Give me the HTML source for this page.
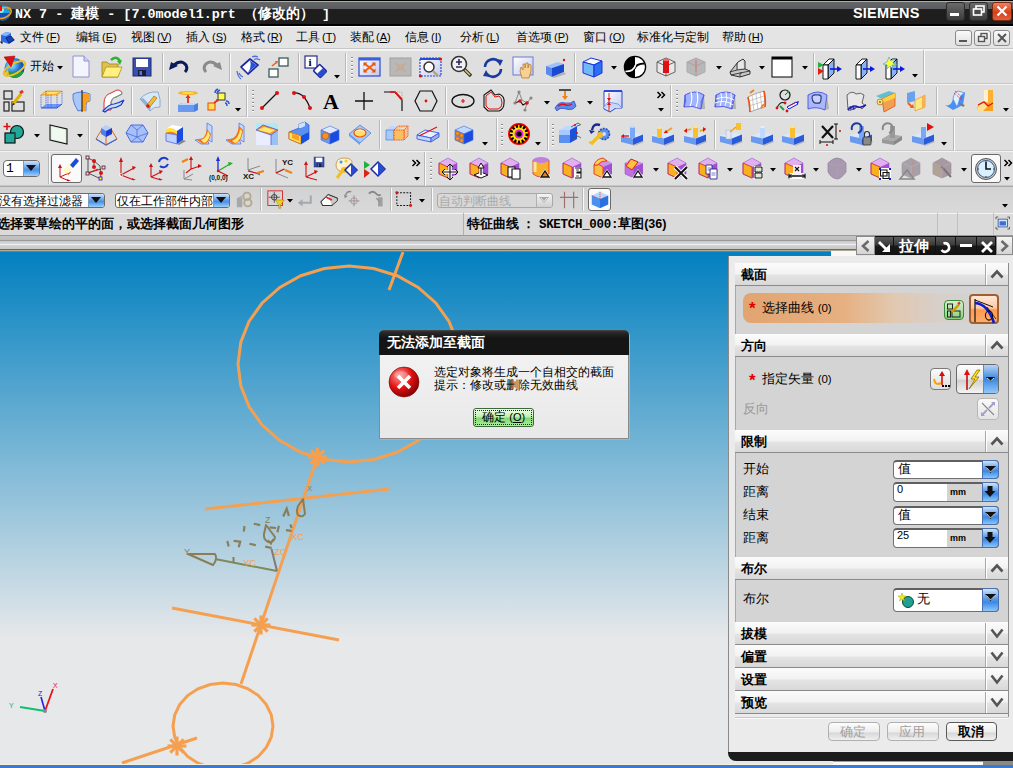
<!DOCTYPE html><html><head><meta charset="utf-8"><style>
*{margin:0;padding:0;box-sizing:border-box}
html,body{width:1013px;height:768px;overflow:hidden;background:#dadada;font-family:"Liberation Sans",sans-serif;}
.a{position:absolute}
.t{position:absolute;white-space:nowrap;line-height:1}
svg{position:absolute;overflow:visible}
</style></head><body><div class="a" style="left:0px;top:0px;width:1013px;height:26px;background:linear-gradient(#000 0px,#000 1px,#b8bcbc 1px,#a0a4a4 2px,#646868 2px,#5a5c60 8.5px,#1e1e1e 9.5px,#1e1e1e 24.5px,#000 24.5px)"></div>
<svg style="left:-6px;top:4px" width="18" height="18" viewBox="0 0 18 18"><circle cx="9" cy="9" r="7.5" fill="#20a0e0"/><circle cx="7" cy="6" r="3" fill="#80f0ff"/><path d="M9 16.5A7.5 7.5 0 0 1 1.5 9L16.5 9A7.5 7.5 0 0 1 9 16.5Z" fill="#1a50b0"/><ellipse cx="9" cy="9" rx="8.5" ry="5" fill="none" stroke="#f0a020" stroke-width="1.6" transform="rotate(-20 9 9)"/><rect x="2" y="1" width="6" height="6" fill="#e01020"/></svg>
<div class="t" style="left:15px;top:6px;color:#fff;font-family:Liberation Mono;font-size:13.4px;font-weight:bold">NX 7 - <span style="font-family:Liberation Sans;font-size:14px">建模</span> - [7.0model1.prt <span style="font-family:Liberation Sans;font-size:14px">（修改的）</span> ]</div>
<div class="t" style="left:853px;top:6px;color:#fff;font-size:14.5px;font-weight:bold;letter-spacing:0.2px">SIEMENS</div>
<div class="a" style="left:946px;top:2px;width:19px;height:19px;border-radius:3px;border:1px solid #2a2a2a;background:linear-gradient(#6a6a6a,#3c3c3c)"></div>
<div class="a" style="left:969px;top:2px;width:19px;height:19px;border-radius:3px;border:1px solid #2a2a2a;background:linear-gradient(#6a6a6a,#3c3c3c)"></div>
<div class="a" style="left:992px;top:2px;width:20px;height:19px;border-radius:3px;border:1px solid #7a2a10;background:linear-gradient(#f08060,#d84018 55%,#e06040)"></div>
<div class="a" style="left:950px;top:13px;width:9px;height:3px;background:#fff"></div>
<svg style="left:972px;top:4px" width="16" height="14" viewBox="0 0 16 14"><rect x="4" y="2" width="8" height="6" fill="none" stroke="#fff" stroke-width="1.6"/><rect x="1.5" y="5" width="8" height="6" fill="#4a4a4a" stroke="#fff" stroke-width="1.6"/></svg>
<svg style="left:994px;top:3px" width="16" height="16" viewBox="0 0 16 16"><path d="M3.5 3.5L12.5 12.5M12.5 3.5L3.5 12.5" stroke="#fff" stroke-width="2.2"/></svg>
<div class="a" style="left:0px;top:26px;width:1013px;height:24px;background:linear-gradient(#fafafa 0px,#fafafa 1px,#e4e4e4 1px,#e4e4e4 22px,#c8c8c8 22px,#c8c8c8 23px,#f4f4f4 23px)"></div>
<div class="t" style="left:20px;top:31px;color:#000;font-size:12px;">文件<span style="font-size:11px;margin-left:2px">(<u>F</u>)</span></div>
<div class="t" style="left:76px;top:31px;color:#000;font-size:12px;">编辑<span style="font-size:11px;margin-left:2px">(<u>E</u>)</span></div>
<div class="t" style="left:131px;top:31px;color:#000;font-size:12px;">视图<span style="font-size:11px;margin-left:2px">(<u>V</u>)</span></div>
<div class="t" style="left:186px;top:31px;color:#000;font-size:12px;">插入<span style="font-size:11px;margin-left:2px">(<u>S</u>)</span></div>
<div class="t" style="left:241px;top:31px;color:#000;font-size:12px;">格式<span style="font-size:11px;margin-left:2px">(<u>R</u>)</span></div>
<div class="t" style="left:296px;top:31px;color:#000;font-size:12px;">工具<span style="font-size:11px;margin-left:2px">(<u>T</u>)</span></div>
<div class="t" style="left:350px;top:31px;color:#000;font-size:12px;">装配<span style="font-size:11px;margin-left:2px">(<u>A</u>)</span></div>
<div class="t" style="left:405px;top:31px;color:#000;font-size:12px;">信息<span style="font-size:11px;margin-left:2px">(<u>I</u>)</span></div>
<div class="t" style="left:460px;top:31px;color:#000;font-size:12px;">分析<span style="font-size:11px;margin-left:2px">(<u>L</u>)</span></div>
<div class="t" style="left:516px;top:31px;color:#000;font-size:12px;">首选项<span style="font-size:11px;margin-left:2px">(<u>P</u>)</span></div>
<div class="t" style="left:583px;top:31px;color:#000;font-size:12px;">窗口<span style="font-size:11px;margin-left:2px">(<u>O</u>)</span></div>
<div class="t" style="left:637px;top:31px;color:#000;font-size:12px;">标准化与定制</div>
<div class="t" style="left:722px;top:31px;color:#000;font-size:12px;">帮助<span style="font-size:11px;margin-left:2px">(<u>H</u>)</span></div>
<svg style="left:0px;top:29px" width="16" height="17" viewBox="0 0 16 17"><path d="M1 6L6 3L11 4L11 8L15 11L9 15L3 13L1 12Z" fill="#2a6ae8"/><path d="M1 6L6 3L11 4L6 7Z" fill="#8ab8ff"/><path d="M6 9L11 7L14 11L9 14Z" fill="#1a40c0" stroke="#0a1a50" stroke-width="0.8"/><path d="M1 12L1 14L3 14" stroke="#333" stroke-width="1"/></svg>
<div class="a" style="left:955px;top:30px;width:17px;height:16px;border-radius:3px;border:1px solid #8a8a8a;background:linear-gradient(#fbfbfb,#dedede)"></div>
<div class="a" style="left:974px;top:30px;width:17px;height:16px;border-radius:3px;border:1px solid #8a8a8a;background:linear-gradient(#fbfbfb,#dedede)"></div>
<div class="a" style="left:993px;top:30px;width:17px;height:16px;border-radius:3px;border:1px solid #8a8a8a;background:linear-gradient(#fbfbfb,#dedede)"></div>
<div class="a" style="left:959px;top:40px;width:8px;height:2px;background:#555"></div>
<svg style="left:977px;top:32px" width="12" height="12" viewBox="0 0 12 12"><rect x="4" y="1.5" width="6" height="5" fill="none" stroke="#555" stroke-width="1.4"/><rect x="1.5" y="4.5" width="6" height="5" fill="#eee" stroke="#555" stroke-width="1.4"/></svg>
<svg style="left:996px;top:32px" width="12" height="12" viewBox="0 0 12 12"><path d="M2 2L10 10M10 2L2 10" stroke="#555" stroke-width="2"/></svg>
<div class="a" style="left:0px;top:50px;width:1013px;height:34px;background:#dfdfdf;border-top:1px solid #f4f4f4;border-bottom:1px solid #c8c8c8"></div>
<div class="a" style="left:0px;top:84px;width:1013px;height:33px;background:#dfdfdf;border-top:1px solid #f4f4f4;border-bottom:1px solid #c8c8c8"></div>
<div class="a" style="left:0px;top:117px;width:1013px;height:34px;background:#dfdfdf;border-top:1px solid #f4f4f4;border-bottom:1px solid #c8c8c8"></div>
<div class="a" style="left:0px;top:151px;width:1013px;height:35px;background:#dfdfdf;border-top:1px solid #f4f4f4;border-bottom:1px solid #c8c8c8"></div>
<div class="a" style="left:0px;top:186px;width:1013px;height:27px;background:linear-gradient(#d2d2d2,#d9d9d9);border-top:1px solid #a8a8a8"></div>
<div class="a" style="left:0px;top:213px;width:1013px;height:22px;background:#dadada;border-top:1px solid #f4f4f4"></div>
<div class="t" style="left:-3px;top:218px;color:#000;font-size:12.5px;font-weight:bold">选择要草绘的平的面，或选择截面几何图形</div>
<div class="a" style="left:463px;top:213px;width:1px;height:22px;background:#b0b0b0"></div>
<div class="a" style="left:937px;top:213px;width:1px;height:22px;background:#c0c0c0"></div>
<div class="a" style="left:957px;top:213px;width:1px;height:22px;background:#c0c0c0"></div>
<div class="a" style="left:993px;top:213px;width:1px;height:22px;background:#c0c0c0"></div>
<div class="t" style="left:467px;top:218px;color:#000;font-size:12.5px;font-weight:bold">特征曲线 ： <span style="font-family:Liberation Mono;letter-spacing:-0.3px">SKETCH_000:</span>草图(36)</div>
<svg width="0" height="0" style="position:absolute"><defs>
<linearGradient id="gb" x1="0" y1="0" x2="1" y2="1"><stop offset="0" stop-color="#e8f4ff"/><stop offset="1" stop-color="#2a6ae0"/></linearGradient>
<linearGradient id="go" x1="0" y1="0" x2="1" y2="1"><stop offset="0" stop-color="#fff0a0"/><stop offset="1" stop-color="#f07010"/></linearGradient>
<linearGradient id="gp" x1="0" y1="0" x2="1" y2="1"><stop offset="0" stop-color="#f0d0ff"/><stop offset="1" stop-color="#9040d0"/></linearGradient>
<linearGradient id="gw" x1="0" y1="0" x2="1" y2="1"><stop offset="0" stop-color="#ffffff"/><stop offset="1" stop-color="#c0c8f0"/></linearGradient>
<radialGradient id="gglobe" cx="0.35" cy="0.35" r="0.7"><stop offset="0" stop-color="#a0f0ff"/><stop offset="0.6" stop-color="#1a70d0"/><stop offset="1" stop-color="#0a3a90"/></radialGradient>
<radialGradient id="gred" cx="0.35" cy="0.3" r="0.75"><stop offset="0" stop-color="#ff9a9a"/><stop offset="0.55" stop-color="#e01010"/><stop offset="1" stop-color="#800000"/></radialGradient>
</defs></svg>
<svg style="left:2px;top:55px" width="24" height="24" viewBox="0 0 24 24"><circle cx="12.5" cy="13" r="10" fill="url(#gglobe)"/><path d="M3 16Q8 23 13 23Q19 23 22 16Q15 19 3 16Z" fill="#20a040"/><ellipse cx="12.5" cy="13.5" rx="12" ry="5" fill="none" stroke="#f0c020" stroke-width="2" transform="rotate(-30 12.5 13.5)"/><path d="M2 19L6 14L7 20Z" fill="#f0c020"/><path d="M2 2L13 1L9 12Z" fill="#e01010" stroke="#a00000" stroke-width="0.5"/></svg>
<div class="t" style="left:30px;top:60px;color:#000;font-size:12px">开始</div>
<svg style="left:57px;top:65.5px" width="6" height="4" viewBox="0 0 6 4"><path d="M0 0L6 0L3 3.5Z" fill="#000"/></svg>
<svg style="left:70px;top:55px" width="24" height="24" viewBox="0 0 24 24"><path d="M3 1L14 1L19 6L19 22L3 22Z" fill="#f4f4ff" stroke="#9090d0" stroke-width="1"/><path d="M14 1L14 6L19 6" fill="#d0d0f0" stroke="#9090d0" stroke-width="1"/></svg>
<svg style="left:100px;top:55px" width="24" height="24" viewBox="0 0 24 24"><path d="M2 8L2 22L18 22L18 9L9 9L7 7L2 7Z" fill="#e0c050" stroke="#a08010" stroke-width="0.8"/><path d="M2 22L6 12L22 12L18 22Z" fill="#fff080" stroke="#b09020" stroke-width="0.8"/><path d="M11 5Q16 0 20 6" fill="none" stroke="#30b030" stroke-width="2.6"/><path d="M17 6L22 5L20 10Z" fill="#30b030"/></svg>
<svg style="left:131px;top:56px" width="24" height="24" viewBox="0 0 24 24"><rect x="2" y="2" width="18" height="18" fill="#3a50b0" stroke="#1a2a70" stroke-width="1"/><rect x="5" y="3" width="12" height="8" fill="#fff"/><rect x="7" y="14" width="8" height="6" fill="#1a1a3a"/><rect x="8.5" y="15" width="2.5" height="4" fill="#5a7ad0"/></svg>
<div class="a" style="left:162px;top:53px;width:1px;height:29px;background:#b8b8b8"></div>
<div class="a" style="left:163px;top:53px;width:1px;height:29px;background:#fafafa"></div>
<svg style="left:168px;top:56px" width="24" height="24" viewBox="0 0 24 24"><path d="M6 9Q13 3 18 9Q20 13 17 16" fill="none" stroke="#0a1a5a" stroke-width="3"/><path d="M1 14L3 6L10 10Z" fill="#0a1a5a"/></svg>
<svg style="left:199px;top:56px" width="24" height="24" viewBox="0 0 24 24"><path d="M18 9Q11 3 6 9Q4 13 7 16" fill="none" stroke="#8a8a8a" stroke-width="3"/><path d="M23 14L21 6L14 10Z" fill="#8a8a8a"/></svg>
<div class="a" style="left:229px;top:53px;width:1px;height:29px;background:#b8b8b8"></div>
<div class="a" style="left:230px;top:53px;width:1px;height:29px;background:#fafafa"></div>
<svg style="left:237px;top:55px" width="24" height="24" viewBox="0 0 24 24"><path d="M4 12L13 4L21 10L11 19Z" fill="#fff" stroke="#1a2aa0" stroke-width="1.7" stroke-linejoin="round"/><path d="M13 5.5L19.5 10L11 17.5Q15 12 13 5.5Z" fill="#2a50d8"/><path d="M15 2Q18 0.5 21 2M17 4.5Q20 3 23 5" fill="none" stroke="#4a70e0" stroke-width="1.3"/><path d="M2 18Q3 21 6 22M0 16Q1 22 4 24" fill="none" stroke="#4a70e0" stroke-width="1.3"/></svg>
<svg style="left:267px;top:56px" width="24" height="24" viewBox="0 0 24 24"><rect x="12" y="2" width="9" height="8" fill="#fff" stroke="#3a5a5a" stroke-width="1.3"/><rect x="2" y="13" width="9" height="8" fill="#fff" stroke="#3a5a5a" stroke-width="1.3"/><path d="M5 10L10 6" stroke="#f06010" stroke-width="1.6"/><path d="M8 5L11 5L10 8Z" fill="#f06010"/></svg>
<div class="a" style="left:298px;top:53px;width:1px;height:29px;background:#b8b8b8"></div>
<div class="a" style="left:299px;top:53px;width:1px;height:29px;background:#fafafa"></div>
<svg style="left:304px;top:55px" width="24" height="24" viewBox="0 0 24 24"><rect x="1" y="1" width="12" height="12" fill="#fff" stroke="#2a2a8a" stroke-width="1.2"/><text x="4.5" y="11" font-family="Liberation Serif" font-weight="bold" font-size="11" fill="#000">i</text><g transform="rotate(45 16 16)"><rect x="11" y="11.5" width="10" height="9" rx="1" fill="#fff" stroke="#1a2aa0" stroke-width="1.5"/><path d="M16 12L21 12L21 20L16 20Z" fill="#2a4ad0"/></g></svg>
<svg style="left:334px;top:74.5px" width="6" height="4" viewBox="0 0 6 4"><path d="M0 0L6 0L3 3.5Z" fill="#000"/></svg>
<div class="a" style="left:345px;top:53px;width:1px;height:29px;background:#b8b8b8"></div>
<div class="a" style="left:346px;top:53px;width:1px;height:29px;background:#fafafa"></div>
<div class="a" style="left:351px;top:57px;width:2px;height:22px;background:repeating-linear-gradient(#8a8a8a 0px,#8a8a8a 1px,#fff 1px,#fff 2px,transparent 2px,transparent 4px)"></div>
<svg style="left:358px;top:56px" width="24" height="24" viewBox="0 0 24 24"><rect x="1" y="2" width="21" height="18" fill="url(#gw)" stroke="#2a4ad0" stroke-width="1.2"/><rect x="1" y="2" width="21" height="2.5" fill="#3a60e0"/><path d="M7 8L16 15M16 8L7 15" stroke="#f06010" stroke-width="2"/><path d="M5.5 6.5L9.5 6.5L5.5 10.5Z M17.5 6.5L13.5 6.5L17.5 10.5Z M5.5 16.5L9.5 16.5L5.5 12.5Z M17.5 16.5L13.5 16.5L17.5 12.5Z" fill="#e05010"/></svg>
<svg style="left:389px;top:56px" width="24" height="24" viewBox="0 0 24 24"><rect x="1" y="2" width="21" height="18" fill="#b8b8b8" stroke="#a0a0a0" stroke-width="1"/><path d="M6 7L17 16M17 7L6 16" stroke="#c8a890" stroke-width="1.6"/><circle cx="11.5" cy="11.5" r="3" fill="none" stroke="#c8a890"/></svg>
<svg style="left:419px;top:56px" width="24" height="24" viewBox="0 0 24 24"><rect x="1" y="2" width="21" height="18" fill="url(#gw)" stroke="#2a4ad0" stroke-width="1.2" stroke-dasharray="2 1"/><path d="M1 3L22 3" stroke="#2a4ad0" stroke-width="2"/><circle cx="10" cy="11" r="5" fill="#fff" stroke="#333" stroke-width="1.5"/><path d="M14 15L19 20" stroke="#c0a060" stroke-width="2.4"/><circle cx="21.5" cy="3" r="1.6" fill="#e01010"/><circle cx="1.5" cy="20" r="1.6" fill="#e01010"/></svg>
<svg style="left:450px;top:55px" width="24" height="24" viewBox="0 0 24 24"><circle cx="9" cy="9" r="7.5" fill="#f0f0f0" stroke="#333" stroke-width="1.6"/><path d="M9 4L9 10M6 7L12 7M6 12L12 12" stroke="#2a2a5a" stroke-width="1.6"/><path d="M14 14L21 21" stroke="#333" stroke-width="3.5"/><path d="M15 15L20 20" stroke="#e0c060" stroke-width="1.6"/></svg>
<svg style="left:481px;top:56px" width="24" height="24" viewBox="0 0 24 24"><path d="M4 11A8 8 0 0 1 18 6" fill="none" stroke="#1a3aa0" stroke-width="2.6"/><path d="M20 13A8 8 0 0 1 6 18" fill="none" stroke="#1a3aa0" stroke-width="2.6"/><path d="M15 3L22 4L19 10Z M9 21L2 20L5 14Z" fill="#1a3aa0"/></svg>
<svg style="left:512px;top:56px" width="24" height="24" viewBox="0 0 24 24"><rect x="1" y="1" width="20" height="18" fill="url(#gw)" stroke="#6a7ad0" stroke-width="1"/><path d="M10 22L8 15L9 11L11 14L11 8L13 8L13 12L14 7L16 7L16 12L17 8L19 9L19 15L17 22Z" fill="#f8d090" stroke="#b07020" stroke-width="0.7"/></svg>
<svg style="left:543px;top:56px" width="24" height="24" viewBox="0 0 24 24"><path d="M3 10L15 6L21 8L9 12Z" fill="#a0c0ff"/><path d="M3 10L9 12L9 21L3 18Z" fill="#5a8af0"/><path d="M9 12L21 8L21 16L9 21Z" fill="#1a4ad0"/><path d="M9 21L21 16L23 18L11 22Z" fill="#b0b0b0"/><circle cx="21" cy="4" r="1.2" fill="#e01010"/></svg>
<div class="a" style="left:574px;top:53px;width:1px;height:29px;background:#b8b8b8"></div>
<div class="a" style="left:575px;top:53px;width:1px;height:29px;background:#fafafa"></div>
<svg style="left:580px;top:55px" width="24" height="24" viewBox="0 0 24 24"><path d="M3 7L11 3L22 6L14 10Z" fill="#f4faff" stroke="#1a30e0" stroke-width="1"/><path d="M3 7L14 10L14 22L3 18Z" fill="#70b8f8" stroke="#1a30e0" stroke-width="1"/><path d="M14 10L22 6L22 18L14 22Z" fill="#2a70f0" stroke="#1a30e0" stroke-width="1"/></svg>
<svg style="left:611px;top:65.5px" width="6" height="4" viewBox="0 0 6 4"><path d="M0 0L6 0L3 3.5Z" fill="#000"/></svg>
<svg style="left:622px;top:55px" width="24" height="24" viewBox="0 0 24 24"><circle cx="13" cy="12" r="10.6" fill="#fff" stroke="#000" stroke-width="1.3"/><path d="M13 1.4A10.6 10.6 0 0 0 13 22.6Z" fill="#000"/><path d="M12.5 14Q14 8.5 22.5 8.5" fill="none" stroke="#000" stroke-width="1.8"/><path d="M13.5 10Q12 16.5 3.5 16.5" fill="none" stroke="#fff" stroke-width="1.6"/></svg>
<svg style="left:654px;top:55px" width="24" height="24" viewBox="0 0 24 24"><path d="M3 7L12 3L21 7L21 17L12 21L3 17Z" fill="#e8e8e8" stroke="#555" stroke-width="0.9"/><path d="M3 7L12 11L21 7M12 11L12 21" fill="none" stroke="#555" stroke-width="0.9"/><rect x="9" y="5" width="6" height="13" fill="#e01010"/><ellipse cx="12" cy="5" rx="3" ry="1.3" fill="#ff6060"/></svg>
<svg style="left:684px;top:55px" width="24" height="24" viewBox="0 0 24 24"><path d="M3 7L12 3L21 7L21 17L12 21L3 17Z" fill="#b8b8b8" stroke="#a8a8a8" stroke-width="0.9"/><path d="M3 7L12 11L21 7M12 11L12 21" fill="none" stroke="#a0a0a0" stroke-width="0.9"/><rect x="11" y="5" width="2" height="12" fill="#c89090"/></svg>
<svg style="left:716px;top:65.5px" width="6" height="4" viewBox="0 0 6 4"><path d="M0 0L6 0L3 3.5Z" fill="#000"/></svg>
<svg style="left:728px;top:55px" width="24" height="24" viewBox="0 0 24 24"><path d="M2 17L10 7L15 4L17 6L17 14L22 16L22 19L12 22L3 20Z" fill="#c8c8c8" stroke="#333" stroke-width="1"/><path d="M2 17L9 15L9 8M9 15L17 14M3 20L12 18L22 16M12 18L12 22" fill="none" stroke="#333" stroke-width="0.9"/><path d="M10 8L15 5L16 13L10 14Z" fill="#e8e8e8"/><circle cx="13" cy="18" r="0.8" fill="#333"/></svg>
<svg style="left:759px;top:65.5px" width="6" height="4" viewBox="0 0 6 4"><path d="M0 0L6 0L3 3.5Z" fill="#000"/></svg>
<svg style="left:770px;top:55px" width="24" height="24" viewBox="0 0 24 24"><rect x="2" y="2" width="20" height="20" fill="#fff" stroke="#000" stroke-width="1"/><rect x="2" y="2" width="20" height="2.5" fill="#000"/></svg>
<svg style="left:802px;top:65.5px" width="6" height="4" viewBox="0 0 6 4"><path d="M0 0L6 0L3 3.5Z" fill="#000"/></svg>
<div class="a" style="left:813px;top:53px;width:1px;height:29px;background:#b8b8b8"></div>
<div class="a" style="left:814px;top:53px;width:1px;height:29px;background:#fafafa"></div>
<svg style="left:818px;top:56px" width="24" height="24" viewBox="0 0 24 24"><path d="M5 9L11 3L16 3L10 9Z" fill="#fff" stroke="#000" stroke-width="0.9"/><path d="M10 9L16 3L16 17L10 23Z" fill="#8ab0f8" stroke="#000" stroke-width="0.9"/><path d="M5 9L10 9L10 23L5 23Z" fill="#fff" stroke="#000" stroke-width="0.9"/><path d="M12 13L21 13" stroke="#0a1ae0" stroke-width="1.6"/><path d="M19 10L24 13L19 16Z" fill="#0a1ae0"/><path d="M0 6L6 9L0 12Z" fill="#20b040"/><path d="M0 12L6 15L0 19Z" fill="#e02010"/></svg>
<svg style="left:851px;top:56px" width="24" height="24" viewBox="0 0 24 24"><path d="M5 9L11 3L16 3L10 9Z" fill="#fff" stroke="#000" stroke-width="0.9"/><path d="M10 9L16 3L16 17L10 23Z" fill="#8ab0f8" stroke="#000" stroke-width="0.9"/><path d="M5 9L10 9L10 23L5 23Z" fill="#fff" stroke="#000" stroke-width="0.9"/><path d="M12 13L21 13" stroke="#0a1ae0" stroke-width="1.6"/><path d="M19 10L24 13L19 16Z" fill="#0a1ae0"/></svg>
<svg style="left:881px;top:56px" width="24" height="24" viewBox="0 0 24 24"><path d="M5 9L11 3L16 3L10 9Z" fill="#fff" stroke="#000" stroke-width="0.9"/><path d="M10 9L16 3L16 17L10 23Z" fill="#8ab0f8" stroke="#000" stroke-width="0.9"/><path d="M5 9L10 9L10 23L5 23Z" fill="#fff" stroke="#000" stroke-width="0.9"/><path d="M12 13L21 13" stroke="#0a1ae0" stroke-width="1.6"/><path d="M19 10L24 13L19 16Z" fill="#0a1ae0"/><path d="M8 1L10 5L14 3L12 7L16 9L11 9L12 13L9 10L6 13L6 9L2 8L6 6Z" fill="#ffff30" stroke="#30a0e0" stroke-width="0.6"/></svg>
<svg style="left:912px;top:73.5px" width="6" height="4" viewBox="0 0 6 4"><path d="M0 0L6 0L3 3.5Z" fill="#000"/></svg>
<div class="a" style="left:923px;top:50px;width:1px;height:34px;background:#b8b8b8"></div>
<div class="a" style="left:924px;top:50px;width:1px;height:34px;background:#fafafa"></div>
<svg style="left:2px;top:89px" width="24" height="24" viewBox="0 0 24 24"><rect x="2" y="2" width="8" height="8" fill="none" stroke="#222" stroke-width="1.2"/><rect x="2" y="13" width="5" height="9" fill="none" stroke="#222" stroke-width="1.2"/><rect x="10" y="13" width="12" height="9" fill="none" stroke="#222" stroke-width="1.2"/><path d="M11 15L19 5" stroke="#e0b000" stroke-width="3"/><path d="M18 4L21 2" stroke="#e03030" stroke-width="3"/><path d="M10 17L11 14L13 15Z" fill="#222"/></svg>
<div class="a" style="left:33px;top:87px;width:1px;height:28px;background:#b8b8b8"></div>
<div class="a" style="left:34px;top:87px;width:1px;height:28px;background:#fafafa"></div>
<svg style="left:39px;top:89px" width="24" height="24" viewBox="0 0 24 24"><path d="M2 6L7 2L23 2L18 6Z" fill="#f8b830" stroke="#e09020" stroke-width="0.6"/><path d="M4 5L8 3L20 3L16 5Z" fill="#ffe070"/><path d="M2 19L7 15L23 15L18 19Z" fill="#6a9af8"/><path d="M2 6L2 19M18 6L18 19M23 2L23 15M7 2L7 15M9 6L9 19M12 6L12 19" fill="none" stroke="#4a60e0" stroke-width="0.8" stroke-dasharray="1.2 0.6"/><path d="M2 19L18 19L23 15" fill="none" stroke="#3a50d0" stroke-width="1"/></svg>
<svg style="left:70px;top:89px" width="24" height="24" viewBox="0 0 24 24"><path d="M3 5Q11 1 20 5L20 12Q16 12 16 16L16 22Q12 20 8 22Q4 16 3 10Z" fill="#a8c8f8" stroke="#3a6ae0" stroke-width="0.8"/><path d="M12 4L20 5L20 12Q16 12 16 16L16 22L12 22Z" fill="#f8a020"/><path d="M12 1L12 23" stroke="#000" stroke-width="0.9"/></svg>
<svg style="left:101px;top:89px" width="24" height="24" viewBox="0 0 24 24"><path d="M3 14Q3 6 10 4L16 1Q21 1 21 5L15 8Q10 9 10 15L10 21L3 21Z" fill="#fff" stroke="#e03030" stroke-width="1"/><path d="M10 15Q10 9 15 8L21 5" fill="none" stroke="#20c0a0" stroke-width="0.9"/><path d="M2 22Q8 15 13 15Q18 14 23 11L20 16Q15 19 11 19Q7 20 4 23Z" fill="#c8e0f8" stroke="#1a3ad0" stroke-width="1.2"/></svg>
<div class="a" style="left:131px;top:87px;width:1px;height:28px;background:#b8b8b8"></div>
<div class="a" style="left:132px;top:87px;width:1px;height:28px;background:#fafafa"></div>
<svg style="left:138px;top:89px" width="24" height="24" viewBox="0 0 24 24"><path d="M2 10Q9 2 20 3Q23 10 22 18Q16 17 12 22Q7 15 2 10Z" fill="#d8e8f8" stroke="#7a9ac0" stroke-width="0.8"/><path d="M2 10Q7 15 12 22L13 17Q9 13 5 9Z" fill="#90b0d8"/><path d="M8 17L16 7L19 9L11 19Z" fill="#f0c030" stroke="#906010" stroke-width="0.6"/><circle cx="10" cy="17" r="1.7" fill="#e01010"/></svg>
<div class="a" style="left:168px;top:87px;width:1px;height:28px;background:#b8b8b8"></div>
<div class="a" style="left:169px;top:87px;width:1px;height:28px;background:#fafafa"></div>
<svg style="left:176px;top:89px" width="24" height="24" viewBox="0 0 24 24"><ellipse cx="12" cy="4" rx="10" ry="2" fill="#f8b030"/><ellipse cx="12" cy="4" rx="6" ry="1" fill="#ffe040"/><path d="M12 15L12 8" stroke="#e03010" stroke-width="1.8"/><path d="M9.5 9L12 5.5L14.5 9Z" fill="#e03010"/><path d="M2 16L6 14L22 14L22 21L18 23L2 23Z" fill="#4a80e0"/><path d="M2 16L6 14L22 14L18 16Z" fill="#c0d8ff"/><path d="M2 16L18 16L18 23L2 23Z" fill="#6a9af0"/></svg>
<svg style="left:206px;top:89px" width="24" height="24" viewBox="0 0 24 24"><rect x="12" y="4" width="7" height="7" fill="#ffff50" stroke="#333" stroke-width="1"/><rect x="2" y="14" width="7" height="7" fill="#ffe050" stroke="#f05010" stroke-width="1.1"/><path d="M8 14L12 11" stroke="#e03010" stroke-width="1.6"/><path d="M10 10L13 10L12 13Z" fill="#e03010"/><path d="M9 4Q9 1 12 0M11 5Q11 2 14 1M20 12Q23 12 23 15M19 14Q21 14 21 17" fill="none" stroke="#2a50e0" stroke-width="1.4"/></svg>
<svg style="left:235px;top:107.5px" width="6" height="4" viewBox="0 0 6 4"><path d="M0 0L6 0L3 3.5Z" fill="#000"/></svg>
<div class="a" style="left:246px;top:85px;width:1px;height:32px;background:#b8b8b8"></div>
<div class="a" style="left:247px;top:85px;width:1px;height:32px;background:#fafafa"></div>
<div class="a" style="left:252px;top:90px;width:2px;height:23px;background:repeating-linear-gradient(#8a8a8a 0px,#8a8a8a 1px,#fff 1px,#fff 2px,transparent 2px,transparent 4px)"></div>
<svg style="left:259px;top:89px" width="24" height="24" viewBox="0 0 24 24"><path d="M3 19L18 4" stroke="#111" stroke-width="1.3"/><circle cx="3" cy="19" r="2" fill="#e01010"/><circle cx="18" cy="4" r="2" fill="#e01010"/></svg>
<svg style="left:291px;top:89px" width="24" height="24" viewBox="0 0 24 24"><path d="M3 4Q13 3 19 19" fill="none" stroke="#111" stroke-width="1.3"/><circle cx="3" cy="4" r="2" fill="#e01010"/><circle cx="13" cy="8" r="2" fill="#e01010"/><circle cx="19" cy="19" r="2" fill="#e01010"/></svg>
<svg style="left:322px;top:89px" width="24" height="24" viewBox="0 0 24 24"><text x="1" y="20" font-family="Liberation Serif" font-weight="bold" font-size="22" fill="#000">A</text></svg>
<svg style="left:352px;top:89px" width="24" height="24" viewBox="0 0 24 24"><path d="M12 3L12 21M3 12L21 12" stroke="#111" stroke-width="1.3"/></svg>
<svg style="left:383px;top:89px" width="24" height="24" viewBox="0 0 24 24"><path d="M1 3L12 3L19 11L19 22" fill="none" stroke="#111" stroke-width="1.2"/><path d="M12 3L19 11" stroke="#e01010" stroke-width="1.5"/><path d="M7 3L12 3L19 10" stroke="#e01010" stroke-width="1.5" fill="none"/><path d="M12 3L19 3L19 11" fill="none" stroke="#888" stroke-width="0.6" stroke-dasharray="1 1"/></svg>
<svg style="left:414px;top:89px" width="24" height="24" viewBox="0 0 24 24"><path d="M6 2L18 2L23 12L18 22L6 22L1 12Z" fill="none" stroke="#111" stroke-width="1.2"/><circle cx="12" cy="12" r="1.4" fill="#e01010"/></svg>
<div class="a" style="left:445px;top:87px;width:1px;height:28px;background:#b8b8b8"></div>
<div class="a" style="left:446px;top:87px;width:1px;height:28px;background:#fafafa"></div>
<svg style="left:451px;top:89px" width="24" height="24" viewBox="0 0 24 24"><ellipse cx="12" cy="12" rx="11" ry="6.5" fill="none" stroke="#111" stroke-width="1.3"/><path d="M12 10L12 14M10 12L14 12" stroke="#e01010" stroke-width="1.2"/></svg>
<svg style="left:482px;top:89px" width="24" height="24" viewBox="0 0 24 24"><path d="M2 12L2 6L9 1L13 6L17 5Q23 7 22 14Q22 20 17 22L6 22L2 18Z" fill="none" stroke="#111" stroke-width="1.1"/><path d="M4 12L4 7L9 3L13 8L17 7Q20 9 20 14Q20 19 16 20L7 20L4 17Z" fill="none" stroke="#e01010" stroke-width="1"/></svg>
<svg style="left:513px;top:89px" width="24" height="24" viewBox="0 0 24 24"><path d="M2 14L7 12L10 16L15 13" fill="none" stroke="#111" stroke-width="1.2"/><path d="M2 14L6 3L9 11L14 14L12 21M14 14L18 9" fill="none" stroke="#888" stroke-width="1"/><circle cx="6" cy="3" r="1.6" fill="#888"/><circle cx="2" cy="14" r="1.6" fill="#888"/><circle cx="12" cy="21" r="1.6" fill="#888"/><circle cx="18" cy="9" r="1.6" fill="#888"/><circle cx="7" cy="12" r="1.8" fill="#e01010"/><circle cx="14" cy="14" r="1.8" fill="#e01010"/></svg>
<svg style="left:544px;top:100.5px" width="6" height="4" viewBox="0 0 6 4"><path d="M0 0L6 0L3 3.5Z" fill="#000"/></svg>
<svg style="left:554px;top:89px" width="24" height="24" viewBox="0 0 24 24"><path d="M5 1L17 1" stroke="#111" stroke-width="1.4"/><path d="M11 2L11 8" stroke="#f08010" stroke-width="1.8"/><path d="M8 7L11 11L14 7Z" fill="#f08010"/><path d="M1 19Q5 12 11 14Q17 15 20 12L22 17Q19 22 12 20Q6 18 3 22Z" fill="#5a8af0" stroke="#2a4ad0" stroke-width="0.8"/><path d="M4 17Q8 14 12 16Q15 17 18 15" fill="none" stroke="#e01010" stroke-width="1.4"/></svg>
<svg style="left:587px;top:100.5px" width="6" height="4" viewBox="0 0 6 4"><path d="M0 0L6 0L3 3.5Z" fill="#000"/></svg>
<svg style="left:600px;top:89px" width="24" height="24" viewBox="0 0 24 24"><path d="M4 2L22 2L22 19L16 19L10 23L4 20Z" fill="url(#gw)" stroke="#2a4ad0" stroke-width="1"/><path d="M4 2L22 2" stroke="#2a4ad0" stroke-width="2"/><path d="M3 19L8 13L18 15L22 19" fill="#c8d8f8" stroke="#6a8ae0" stroke-width="0.8"/><path d="M9 4L9 22" stroke="#e01010" stroke-width="0.9"/><path d="M7 9L9 12L11 9Z M7 16L9 13L11 16Z" fill="#e01010"/></svg>
<svg style="left:657px;top:91px" width="9" height="8" viewBox="0 0 9 8"><path d="M0.5 1L3.5 4L0.5 7M4.5 1L7.5 4L4.5 7" fill="none" stroke="#000" stroke-width="1.5"/></svg>
<svg style="left:658px;top:107.5px" width="6" height="4" viewBox="0 0 6 4"><path d="M0 0L6 0L3 3.5Z" fill="#000"/></svg>
<div class="a" style="left:670px;top:85px;width:1px;height:32px;background:#b8b8b8"></div>
<div class="a" style="left:671px;top:85px;width:1px;height:32px;background:#fafafa"></div>
<div class="a" style="left:676px;top:90px;width:2px;height:23px;background:repeating-linear-gradient(#8a8a8a 0px,#8a8a8a 1px,#fff 1px,#fff 2px,transparent 2px,transparent 4px)"></div>
<svg style="left:682px;top:89px" width="24" height="24" viewBox="0 0 24 24"><path d="M3 6Q13 0 22 6L19 20Q11 16 2 18Z" fill="#a0b4ff" stroke="#4a50e0" stroke-width="0.9"/><path d="M3 6Q5 12 2 18M22 6Q18 12 19 20" fill="none" stroke="#4a50e0" stroke-width="0.8"/><path d="M19 20L23 20L22 6" fill="#888" opacity="0.5"/><path d="M9 3Q11 11 8 17M15 3Q17 11 14 18" fill="none" stroke="#fff" stroke-width="1.2"/></svg>
<svg style="left:713px;top:89px" width="24" height="24" viewBox="0 0 24 24"><path d="M3 6Q13 0 22 6L19 20Q11 16 2 18Z" fill="#a0b4ff" stroke="#4a50e0" stroke-width="0.9"/><path d="M3 6Q5 12 2 18M22 6Q18 12 19 20" fill="none" stroke="#4a50e0" stroke-width="0.8"/><path d="M19 20L23 20L22 6" fill="#888" opacity="0.5"/><path d="M8 4Q10 11 7 17M13 3Q15 11 12 17M18 4Q19 11 17 18M3 10Q12 6 21 11M2 14Q12 10 20 16" fill="none" stroke="#fff" stroke-width="1"/></svg>
<svg style="left:744px;top:89px" width="24" height="24" viewBox="0 0 24 24"><path d="M4 8Q12 4 20 2L21 18Q13 20 6 23Z" fill="#fff" stroke="#888" stroke-width="0.7"/><path d="M8 6L10 22M12 5L14 21M16 3L18 20M5 12L20 7M5 17L21 12" fill="none" stroke="#aaa" stroke-width="0.6"/><path d="M4 8Q6 15 6 23M20 2Q22 10 21 18" fill="none" stroke="#f05010" stroke-width="1.6"/><path d="M6 4L10 1M17 19L20 15" stroke="#f08020" stroke-width="2"/></svg>
<svg style="left:775px;top:89px" width="24" height="24" viewBox="0 0 24 24"><circle cx="10" cy="6" r="5" fill="none" stroke="#111" stroke-width="1.2"/><path d="M10 6L13 3" stroke="#e01010" stroke-width="1"/><circle cx="13" cy="3" r="1.2" fill="#20a040"/><path d="M2 19Q5 12 10 14" fill="none" stroke="#111" stroke-width="1.1"/><circle cx="2" cy="19" r="1.4" fill="#e01010"/><circle cx="10" cy="14" r="1.4" fill="#e01010"/><circle cx="12" cy="22" r="1.4" fill="#e01010"/><path d="M5 17L9 21" stroke="#20a040" stroke-width="2"/><path d="M12 18L21 13L23 15L14 20Z" fill="#f0f0ff" stroke="#1a1ad0" stroke-width="1"/><path d="M14 17L20 14" stroke="#e01010" stroke-width="0.8"/><path d="M21 13L24 12L23 15Z" fill="#1a1ad0"/></svg>
<svg style="left:805px;top:89px" width="24" height="24" viewBox="0 0 24 24"><path d="M3 6Q13 0 22 6L20 21Q11 17 3 20Z" fill="#a8b8ff" stroke="#4a50e0" stroke-width="0.9"/><path d="M7 9Q7 5 12 6Q17 5 16 10Q16 15 12 14Q8 15 7 9Z" fill="#c8d0ff" stroke="#2a3a6a" stroke-width="1.2"/><path d="M20 21L24 20L22 6" fill="#888" opacity="0.5"/></svg>
<div class="a" style="left:837px;top:87px;width:1px;height:28px;background:#b8b8b8"></div>
<div class="a" style="left:838px;top:87px;width:1px;height:28px;background:#fafafa"></div>
<svg style="left:844px;top:89px" width="24" height="24" viewBox="0 0 24 24"><path d="M3 6Q8 1 12 5Q17 3 20 6L18 14Q21 17 22 16L18 20Q14 16 10 20Q6 22 4 21Z" fill="#e8e8e8" stroke="#555" stroke-width="0.9"/><path d="M4 21Q9 15 14 18Q17 19 22 16" fill="none" stroke="#1a1ab0" stroke-width="1.5"/><path d="M6 17L7 21M9 17L10 21M4 19L12 19" stroke="#1a1ab0" stroke-width="0.9"/></svg>
<svg style="left:874px;top:89px" width="24" height="24" viewBox="0 0 24 24"><path d="M2 7L15 2L21 4L8 10Z" fill="#60c0d0"/><path d="M8 10L21 4L21 17L10 23Z" fill="#f0a050" stroke="#e05020" stroke-width="0.8"/><path d="M8 10L21 4L21 9L8 14Z" fill="#ffd040"/><circle cx="6" cy="13" r="3" fill="#ffe080" stroke="#a08020" stroke-width="0.8"/><circle cx="6" cy="13" r="1" fill="#a06010"/></svg>
<svg style="left:904px;top:89px" width="24" height="24" viewBox="0 0 24 24"><path d="M3 4L11 2L11 12L3 14Z" fill="#6aa0f0"/><path d="M11 11Q16 9 21 6L21 18Q16 20 11 22Z" fill="#ffe880" stroke="#e0a040" stroke-width="0.8"/><path d="M21 6L21 18L18 20L18 8Z" fill="#f8b050"/><path d="M4 14L8 18" stroke="#f06010" stroke-width="2"/><path d="M6 19L10 19L9 15Z" fill="#f06010"/></svg>
<div class="a" style="left:936px;top:87px;width:1px;height:28px;background:#b8b8b8"></div>
<div class="a" style="left:937px;top:87px;width:1px;height:28px;background:#fafafa"></div>
<svg style="left:943px;top:89px" width="24" height="24" viewBox="0 0 24 24"><path d="M2 16Q8 18 10 10Q11 3 15 2L22 4L20 16L10 21Z" fill="#4a90f0"/><path d="M10 10Q11 3 15 2L22 4Q17 5 16 12L14 18Z" fill="#e0f0ff" stroke="#4a7ae0" stroke-width="0.6"/><path d="M11 4L19 11M12 2L20 9" stroke="#e01010" stroke-width="0.9" stroke-dasharray="1 1"/><path d="M16 14L22 16L20 18Z" fill="#777"/></svg>
<svg style="left:973px;top:89px" width="24" height="24" viewBox="0 0 24 24"><path d="M11 1L20 1L20 22L11 22Z" fill="#ffb030"/><path d="M11 1L15 1L15 14L11 14Z" fill="#fff0d0"/><path d="M4 22Q4 14 11 12L20 16L20 22Z" fill="#f8a020"/><path d="M4 22Q5 15 11 13L15 17L10 22Z" fill="#ffe090"/><path d="M5 16L11 13L15 17L20 14" fill="none" stroke="#e01010" stroke-width="1.3"/></svg>
<svg style="left:1003px;top:107.5px" width="6" height="4" viewBox="0 0 6 4"><path d="M0 0L6 0L3 3.5Z" fill="#000"/></svg>
<svg style="left:2px;top:122px" width="24" height="24" viewBox="0 0 24 24"><circle cx="15" cy="10" r="6.5" fill="#20a898" stroke="#111" stroke-width="1.2"/><rect x="3" y="11" width="10" height="10" fill="#20a898" stroke="#111" stroke-width="1.2"/><path d="M13 11L13 16" stroke="#555" stroke-width="0.8"/><path d="M5 1L5 8M1.5 4.5L8.5 4.5" stroke="#e01010" stroke-width="1.6"/></svg>
<svg style="left:34px;top:133.5px" width="6" height="4" viewBox="0 0 6 4"><path d="M0 0L6 0L3 3.5Z" fill="#000"/></svg>
<svg style="left:47px;top:122px" width="24" height="24" viewBox="0 0 24 24"><path d="M3 3L20 7L20 22L3 18Z" fill="#e0f0e0" stroke="#111" stroke-width="1.1"/><path d="M5 5L18 8L18 20L5 17Z" fill="#f8fff8" opacity="0.6"/></svg>
<svg style="left:77px;top:133.5px" width="6" height="4" viewBox="0 0 6 4"><path d="M0 0L6 0L3 3.5Z" fill="#000"/></svg>
<div class="a" style="left:88px;top:120px;width:1px;height:29px;background:#b8b8b8"></div>
<div class="a" style="left:89px;top:120px;width:1px;height:29px;background:#fafafa"></div>
<svg style="left:94px;top:122px" width="24" height="24" viewBox="0 0 24 24"><path d="M2 17L8 7L17 7L23 17L12 23Z" fill="none" stroke="#e06020" stroke-width="1"/><path d="M2 17L12 23L23 17" fill="none" stroke="#3a6ae0" stroke-width="1.1"/><path d="M12 23L12 12" stroke="#e06020" stroke-width="1"/><path d="M7 6L12 3L18 6L12 9Z" fill="#b0d0ff"/><path d="M7 6L12 9L12 15L7 12Z" fill="#4a80f0"/><path d="M12 9L18 6L18 12L12 15Z" fill="#1a3ad0"/></svg>
<svg style="left:125px;top:122px" width="24" height="24" viewBox="0 0 24 24"><path d="M6 3L18 3L23 11L18 20L6 20L1 11Z" fill="#a8c0f8" stroke="#4a6ae0" stroke-width="1"/><path d="M6 3L12 8L18 3M12 8L12 15M1 11L12 15L23 11M6 20L12 15L18 20" fill="none" stroke="#4a6ae0" stroke-width="0.8"/></svg>
<div class="a" style="left:156px;top:120px;width:1px;height:29px;background:#b8b8b8"></div>
<div class="a" style="left:157px;top:120px;width:1px;height:29px;background:#fafafa"></div>
<svg style="left:163px;top:122px" width="24" height="24" viewBox="0 0 24 24"><path d="M3 7L9 3L20 5L14 9Z" fill="#fff"/><path d="M3 7L14 9L14 13L3 11Z" fill="#f88010"/><path d="M3 7Q9 4 14 9L14 12Q8 8 3 11Z" fill="#ffe040"/><path d="M3 11L14 13L14 22L3 19Z" fill="#c0d0ff" stroke="#4a6ae0" stroke-width="0.8"/><path d="M14 9L20 5L20 18L14 22Z" fill="#1a4ae0"/><path d="M14 22L20 18L23 19L16 23Z" fill="#888"/></svg>
<svg style="left:193px;top:122px" width="24" height="24" viewBox="0 0 24 24"><path d="M14 1L19 4L19 20L14 17Z" fill="#c0d8ff" stroke="#4a6ae0" stroke-width="0.7"/><path d="M2 18L8 22L16 22L14 17L8 17Z" fill="#c0d8ff" stroke="#4a6ae0" stroke-width="0.7"/><path d="M4 18Q12 19 14 7L18 12Q16 22 10 22Z" fill="#f87010"/><path d="M8 18Q13 17 15 9L17 13Q15 20 11 21Z" fill="#ffe870"/></svg>
<svg style="left:224px;top:122px" width="24" height="24" viewBox="0 0 24 24"><path d="M15 1L20 4L20 20L15 17Z" fill="#c0d8ff" stroke="#4a6ae0" stroke-width="0.7"/><path d="M2 18L8 22L17 22L15 17L8 17Z" fill="#c0d8ff" stroke="#4a6ae0" stroke-width="0.7"/><path d="M3 18Q13 18 15 4L19 8Q18 21 9 22Z" fill="#f87010"/><path d="M8 19Q15 16 16 7L18 9Q17 19 11 21Z" fill="#ffe870"/></svg>
<svg style="left:255px;top:122px" width="24" height="24" viewBox="0 0 24 24"><rect x="1" y="1" width="22" height="22" fill="#b0e8f8"/><path d="M1 8L8 3L23 8L16 13Z" fill="#f89030"/><path d="M3 8L9 5L20 8L15 11Z" fill="#ffe870"/><path d="M1 8L16 13L16 23L1 23Z" fill="#e8eeff"/><path d="M16 13L23 8L23 23L16 23Z" fill="#9ac0f8"/><path d="M1 8L8 3L23 8L16 13ZM16 13L16 23" fill="none" stroke="#4a4ac0" stroke-width="0.7"/></svg>
<svg style="left:287px;top:122px" width="24" height="24" viewBox="0 0 24 24"><path d="M2 10L12 6L12 2L18 0L22 3L22 17L14 22L2 17Z" fill="#5a90f0" stroke="#2a5ad0" stroke-width="0.7"/><path d="M2 10L14 14L14 22L2 17Z" fill="#ffe060" stroke="#e08010" stroke-width="1"/><path d="M5 12L12 14L12 19L5 16Z" fill="#f8a020"/><path d="M12 6L12 2L18 0L18 4L14 6Z" fill="#d0e0ff"/><path d="M14 14L22 10L22 17L14 22Z" fill="#1a50e0"/></svg>
<svg style="left:318px;top:122px" width="24" height="24" viewBox="0 0 24 24"><path d="M3 8L12 4L21 8L12 12Z" fill="#e0eaff" stroke="#3a6ae0" stroke-width="0.6"/><path d="M3 8L12 12L12 22L3 18Z" fill="#6a9af8" stroke="#3a6ae0" stroke-width="0.6"/><path d="M12 12L21 8L21 18L12 22Z" fill="#1a4ae0" stroke="#3a6ae0" stroke-width="0.6"/><circle cx="7.5" cy="14" r="3.4" fill="#f89020" stroke="#a05010" stroke-width="0.6"/></svg>
<svg style="left:348px;top:122px" width="24" height="24" viewBox="0 0 24 24"><path d="M1 12L12 3L23 11L12 21Z" fill="#a8c8f8" stroke="#4a80e0" stroke-width="0.8"/><path d="M1 12L12 21L12 23L1 14Z" fill="#6a9af0"/><ellipse cx="12" cy="11" rx="6" ry="4" fill="#ffe060" stroke="#f05010" stroke-width="1.2"/><path d="M7 10Q12 6 17 10" fill="none" stroke="#fff" stroke-width="0.8"/></svg>
<div class="a" style="left:379px;top:120px;width:1px;height:29px;background:#b8b8b8"></div>
<div class="a" style="left:380px;top:120px;width:1px;height:29px;background:#fafafa"></div>
<svg style="left:385px;top:122px" width="24" height="24" viewBox="0 0 24 24"><path d="M1 8L5 4L13 4L9 8Z" fill="#c0d8ff"/><path d="M1 8L9 8L9 18L1 18Z" fill="#a8c8f8" stroke="#4a80e0" stroke-width="0.7"/><path d="M9 8L13 4L23 4L19 8L19 18L23 14L23 4" fill="#ffc080" stroke="#f04010" stroke-width="0.9" stroke-dasharray="1 0.7"/><path d="M9 8L19 8L19 18L9 18Z" fill="#f8c060" stroke="#f04010" stroke-width="0.9" stroke-dasharray="1 0.7"/></svg>
<svg style="left:416px;top:122px" width="24" height="24" viewBox="0 0 24 24"><path d="M1 13L9 8L23 11L15 16Z" fill="#e8f0ff" stroke="#3a5ae0" stroke-width="0.9"/><path d="M1 13L15 16L15 20L1 17Z" fill="#c0d8ff" stroke="#3a5ae0" stroke-width="0.9"/><path d="M15 16L23 11L23 15L15 20Z" fill="#9ab0e0" stroke="#3a5ae0" stroke-width="0.9"/><path d="M3 14L21 5" stroke="#e01010" stroke-width="1.2"/></svg>
<div class="a" style="left:447px;top:120px;width:1px;height:29px;background:#b8b8b8"></div>
<div class="a" style="left:448px;top:120px;width:1px;height:29px;background:#fafafa"></div>
<svg style="left:452px;top:122px" width="24" height="24" viewBox="0 0 24 24"><path d="M3 8L12 4L21 8L12 12Z" fill="#c0d8ff" stroke="#3a6ae0" stroke-width="0.6"/><path d="M3 8L12 12L12 22L3 18Z" fill="#6a9af8" stroke="#3a6ae0" stroke-width="0.6"/><path d="M12 12L21 8L21 18L12 22Z" fill="#1a4ae0" stroke="#3a6ae0" stroke-width="0.6"/><circle cx="5.5" cy="11.5" r="2" fill="#f89020" stroke="#a05010" stroke-width="0.5"/><circle cx="9.5" cy="13.5" r="2" fill="#f89020" stroke="#a05010" stroke-width="0.5"/><circle cx="5.5" cy="16.5" r="2" fill="#f89020" stroke="#a05010" stroke-width="0.5"/><circle cx="9.5" cy="18.5" r="2" fill="#f89020" stroke="#a05010" stroke-width="0.5"/></svg>
<svg style="left:482px;top:141.5px" width="6" height="4" viewBox="0 0 6 4"><path d="M0 0L6 0L3 3.5Z" fill="#000"/></svg>
<div class="a" style="left:496px;top:118px;width:1px;height:33px;background:#b8b8b8"></div>
<div class="a" style="left:497px;top:118px;width:1px;height:33px;background:#fafafa"></div>
<div class="a" style="left:501px;top:124px;width:2px;height:22px;background:repeating-linear-gradient(#8a8a8a 0px,#8a8a8a 1px,#fff 1px,#fff 2px,transparent 2px,transparent 4px)"></div>
<svg style="left:507px;top:122px" width="24" height="24" viewBox="0 0 24 24"><circle cx="12" cy="12" r="10" fill="#ffe000" stroke="#f00000" stroke-width="2"/><circle cx="12" cy="12" r="8" fill="none" stroke="#000" stroke-width="3" stroke-dasharray="2.2 1.6"/><circle cx="12" cy="12" r="4.5" fill="#e020e0"/><circle cx="12" cy="12" r="2.6" fill="#000"/></svg>
<svg style="left:535px;top:141.5px" width="6" height="4" viewBox="0 0 6 4"><path d="M0 0L6 0L3 3.5Z" fill="#000"/></svg>
<div class="a" style="left:547px;top:118px;width:1px;height:33px;background:#b8b8b8"></div>
<div class="a" style="left:548px;top:118px;width:1px;height:33px;background:#fafafa"></div>
<div class="a" style="left:552px;top:124px;width:2px;height:22px;background:repeating-linear-gradient(#8a8a8a 0px,#8a8a8a 1px,#fff 1px,#fff 2px,transparent 2px,transparent 4px)"></div>
<svg style="left:557px;top:122px" width="24" height="24" viewBox="0 0 24 24"><path d="M2 8L9 4L20 4L13 8Z" fill="#c0d8ff"/><path d="M2 8L13 8L13 21L2 21Z" fill="#5a90f0"/><path d="M2 8L13 8L13 13L2 13Z" fill="#a8c8ff"/><path d="M13 8L20 4L20 17L13 21Z" fill="#1a50e0"/><path d="M14 5L21 1L24 3M14 18L21 14L24 16M20 4L23 3" fill="none" stroke="#555" stroke-width="0.9"/><path d="M17 2L19 4M19 2L17 4M19 10L21 12M21 10L19 12" stroke="#e01010" stroke-width="0.8"/></svg>
<svg style="left:588px;top:122px" width="24" height="24" viewBox="0 0 24 24"><path d="M4 8Q5 1 12 3" fill="none" stroke="#1a2a8a" stroke-width="2.4"/><path d="M1 8L7 9L3 12Z" fill="#1a2a8a"/><circle cx="16" cy="12" r="5.5" fill="#5a90f0" stroke="#2a50c0" stroke-width="1.6" stroke-dasharray="2 1"/><circle cx="16" cy="12" r="2" fill="#d0e0ff"/><path d="M3 22L11 14" stroke="#f0c020" stroke-width="3.2"/><circle cx="12" cy="13" r="3" fill="#f0c020"/><path d="M1 20L5 22" stroke="#f0c020" stroke-width="2"/></svg>
<svg style="left:620px;top:122px" width="24" height="24" viewBox="0 0 24 24"><path d="M1 14L11 10L23 12.5L13 16.5Z" fill="#d8e8ff"/><path d="M1 14L13 16.5L13 23L1 20Z" fill="#6a9af0"/><path d="M13 16.5L23 12.5L23 19L13 23Z" fill="#2a5ad8"/><path d="M13 23L23 19L24 20L14 24Z" fill="#999" opacity="0.6"/><path d="M10 5L15 5L15 16L10 16Z" fill="#7aa8f8"/><ellipse cx="12.5" cy="5" rx="2.5" ry="1" fill="#c0d8ff"/><path d="M9 14L2 14" stroke="#e01010" stroke-width="1.3"/><path d="M4 12L1 14L4 16Z" fill="#e01010"/></svg>
<svg style="left:651px;top:122px" width="24" height="24" viewBox="0 0 24 24"><path d="M1 14L11 10L23 12.5L13 16.5Z" fill="#d8e8ff"/><path d="M1 14L13 16.5L13 23L1 20Z" fill="#6a9af0"/><path d="M13 16.5L23 12.5L23 19L13 23Z" fill="#2a5ad8"/><path d="M13 23L23 19L24 20L14 24Z" fill="#999" opacity="0.6"/><rect x="6" y="6" width="5" height="10" fill="#f8c030"/><ellipse cx="8.5" cy="6" rx="2.5" ry="1" fill="#ffe890"/><path d="M13 11L21 6" stroke="#f0a020" stroke-width="1.8"/><path d="M13 11L17 11L15 8Z" fill="#e01010"/></svg>
<svg style="left:683px;top:122px" width="24" height="24" viewBox="0 0 24 24"><path d="M1 14L11 10L23 12.5L13 16.5Z" fill="#d8e8ff"/><path d="M1 14L13 16.5L13 23L1 20Z" fill="#6a9af0"/><path d="M13 16.5L23 12.5L23 19L13 23Z" fill="#2a5ad8"/><path d="M13 23L23 19L24 20L14 24Z" fill="#999" opacity="0.6"/><rect x="10" y="5" width="5" height="11" fill="#f8c030"/><ellipse cx="12.5" cy="5" rx="2.5" ry="1" fill="#ffe890"/><path d="M1 9L8 7M17 9L23 7" stroke="#f0a020" stroke-width="1.8"/><path d="M1 9L4 6L4 11Z M23 7L20 5L20 10Z" fill="#e01010"/></svg>
<div class="a" style="left:714px;top:120px;width:1px;height:29px;background:#b8b8b8"></div>
<div class="a" style="left:715px;top:120px;width:1px;height:29px;background:#fafafa"></div>
<svg style="left:719px;top:122px" width="24" height="24" viewBox="0 0 24 24"><path d="M1 14L11 10L23 12.5L13 16.5Z" fill="#d8e8ff"/><path d="M1 14L13 16.5L13 23L1 20Z" fill="#6a9af0"/><path d="M13 16.5L23 12.5L23 19L13 23Z" fill="#2a5ad8"/><path d="M13 23L23 19L24 20L14 24Z" fill="#999" opacity="0.6"/><rect x="7" y="8" width="5" height="9" fill="#e0e8f8" stroke="#aab" stroke-width="0.5"/><rect x="17" y="1" width="5" height="7" fill="#f8c030"/><path d="M11 10L17 5" stroke="#f0a020" stroke-width="1.6"/></svg>
<svg style="left:750px;top:122px" width="24" height="24" viewBox="0 0 24 24"><path d="M1 14L11 10L23 12.5L13 16.5Z" fill="#d8e8ff"/><path d="M1 14L13 16.5L13 23L1 20Z" fill="#6a9af0"/><path d="M13 16.5L23 12.5L23 19L13 23Z" fill="#2a5ad8"/><path d="M13 23L23 19L24 20L14 24Z" fill="#999" opacity="0.6"/><rect x="10" y="5" width="5" height="11" fill="#c0d8ff"/><ellipse cx="12.5" cy="5" rx="2.5" ry="1" fill="#e8f0ff"/></svg>
<svg style="left:781px;top:122px" width="24" height="24" viewBox="0 0 24 24"><path d="M1 14L11 10L23 12.5L13 16.5Z" fill="#d8e8ff"/><path d="M1 14L13 16.5L13 23L1 20Z" fill="#6a9af0"/><path d="M13 16.5L23 12.5L23 19L13 23Z" fill="#2a5ad8"/><path d="M13 23L23 19L24 20L14 24Z" fill="#999" opacity="0.6"/><rect x="9" y="5" width="5" height="11" fill="#f8c030"/><ellipse cx="11.5" cy="5" rx="2.5" ry="1" fill="#ffe890"/></svg>
<div class="a" style="left:813px;top:120px;width:1px;height:29px;background:#b8b8b8"></div>
<div class="a" style="left:814px;top:120px;width:1px;height:29px;background:#fafafa"></div>
<svg style="left:819px;top:122px" width="24" height="24" viewBox="0 0 24 24"><path d="M3 4L14 16M14 4L3 16" stroke="#111" stroke-width="2.2"/><path d="M17 2L17 17M15 2L19 2M15 17L19 17" stroke="#111" stroke-width="1"/><path d="M1 20L14 20M1 18L1 22M14 18L14 22" stroke="#111" stroke-width="1"/><path d="M20 8L22 10M22 8L20 10M7 22L9 24M9 22L7 24" stroke="#e01010" stroke-width="0.8"/></svg>
<svg style="left:849px;top:122px" width="24" height="24" viewBox="0 0 24 24"><path d="M1 14L11 10L23 12.5L13 16.5Z" fill="#d8e8ff"/><path d="M1 14L13 16.5L13 23L1 20Z" fill="#6a9af0"/><path d="M13 16.5L23 12.5L23 19L13 23Z" fill="#2a5ad8"/><path d="M13 23L23 19L24 20L14 24Z" fill="#999" opacity="0.6"/><rect x="10" y="4" width="5" height="12" fill="#7aa8f8"/><path d="M3 8A5 5 0 1 1 9 11" fill="none" stroke="#1a3aa0" stroke-width="2"/><rect x="14" y="15" width="8" height="8" rx="1" fill="#8a8a8a" stroke="#333" stroke-width="0.8"/><path d="M15.5 15L15.5 12A2.5 2.5 0 0 1 20.5 12L20.5 15" fill="none" stroke="#333" stroke-width="1.2"/></svg>
<svg style="left:880px;top:122px" width="24" height="24" viewBox="0 0 24 24"><path d="M2 17L10 12L22 14L14 19Z" fill="#aaa"/><path d="M2 17L14 19L14 23L2 21Z" fill="#999"/><path d="M14 19L22 14L22 18L14 23Z" fill="#888"/><rect x="10" y="4" width="5" height="12" fill="#999"/><path d="M3 8A5 5 0 1 1 9 11" fill="none" stroke="#888" stroke-width="2"/></svg>
<svg style="left:911px;top:122px" width="24" height="24" viewBox="0 0 24 24"><path d="M1 14L11 10L23 12.5L13 16.5Z" fill="#d8e8ff"/><path d="M1 14L13 16.5L13 23L1 20Z" fill="#6a9af0"/><path d="M13 16.5L23 12.5L23 19L13 23Z" fill="#2a5ad8"/><path d="M13 23L23 19L24 20L14 24Z" fill="#999" opacity="0.6"/><rect x="10" y="5" width="5" height="11" fill="#7aa8f8"/><path d="M16 1L23 5L16 9Z" fill="#e01010"/></svg>
<svg style="left:941px;top:141.5px" width="6" height="4" viewBox="0 0 6 4"><path d="M0 0L6 0L3 3.5Z" fill="#000"/></svg>
<div class="a" style="left:953px;top:118px;width:1px;height:33px;background:#b8b8b8"></div>
<div class="a" style="left:954px;top:118px;width:1px;height:33px;background:#fafafa"></div>
<div class="a" style="left:3px;top:160px;width:37px;height:17px;border-radius:4px;background:#fff;border:1px solid #6a6a6a"></div>
<div class="t" style="left:6px;top:162px;color:#000;font-size:13px;font-family:Liberation Mono">1</div>
<div class="a" style="left:23px;top:161px;width:16px;height:15px;border-radius:0 3px 3px 0;background:linear-gradient(#cfe2f8,#5a9ae8 50%,#4a90e8 60%,#9ad0f8);border-left:1px solid #7a9ac0"></div>
<svg style="left:25px;top:165px" width="12" height="7" viewBox="0 0 12 7"><path d="M1 0L11 0L6 6Z" fill="#111"/></svg>
<div class="a" style="left:48px;top:153px;width:1px;height:31px;background:#b8b8b8"></div>
<div class="a" style="left:49px;top:153px;width:1px;height:31px;background:#fafafa"></div>
<div class="a" style="left:51px;top:154px;width:31px;height:29px;border-radius:3px;background:#fafafa;border:1px solid #6a6a6a"></div>
<svg style="left:55px;top:157px" width="24" height="24" viewBox="0 0 24 24"><path d="M5 20L5 10M5 20L14 16M5 20L14 24" stroke="#d01010" stroke-width="1" fill="none"/><path d="M3 11L5 7L7 11Z M12 14L16 15L13 18Z M12 22L16 24L12 24Z" fill="#d01010"/><path d="M11 14L19 5" stroke="#fffad0" stroke-width="5"/><path d="M15 8L21 1L24 4L18 11Z" fill="#1a4ae0"/><ellipse cx="12" cy="14" rx="3" ry="2.5" fill="#fff8c0"/></svg>
<svg style="left:85px;top:156px" width="24" height="24" viewBox="0 0 24 24"><path d="M3 2L3 17L16 23M3 17L13 13M3 2L9 5L15 10L16 23M9 5L9 9" fill="none" stroke="#555" stroke-width="1"/><path d="M3 17L16 13" stroke="#d01010" stroke-width="1"/><circle cx="9" cy="5" r="2" fill="#e01010"/><circle cx="9" cy="11" r="2" fill="#e01010"/><circle cx="16" cy="17" r="2" fill="#e01010"/><rect x="1" y="0" width="3" height="3" fill="#ff0" stroke="#40a" stroke-width="0.8"/><rect x="1" y="16" width="3" height="3" fill="#ff0" stroke="#40a" stroke-width="0.8"/><rect x="17" y="10" width="3" height="3" fill="#ff0" stroke="#40a" stroke-width="0.8"/><rect x="14" y="21" width="3" height="3" fill="#ff0" stroke="#40a" stroke-width="0.8"/></svg>
<svg style="left:116px;top:156px" width="24" height="24" viewBox="0 0 24 24"><path d="M5 19L5 4M5 19L18 12M5 19L18 24" stroke="#d01010" stroke-width="1.1" fill="none"/><path d="M3 6L5 1L7 6Z M16 10L20 11L17 14Z M16 22L20 24L16 24Z" fill="#d01010"/><circle cx="5" cy="19" r="1.6" fill="none" stroke="#fff" stroke-width="0.6"/></svg>
<svg style="left:147px;top:156px" width="24" height="24" viewBox="0 0 24 24"><path d="M4 21L4 10M4 21L14 16M4 21L14 24" stroke="#d01010" stroke-width="1.1" fill="none"/><path d="M2 11L4 7L6 11Z M12 14L16 15L13 18Z M12 22L16 24L12 24Z" fill="#d01010"/><path d="M12 6A5 5 0 0 1 21 4M21 8A5 5 0 0 1 13 10" fill="none" stroke="#1a3ad0" stroke-width="2"/></svg>
<svg style="left:179px;top:156px" width="24" height="24" viewBox="0 0 24 24"><path d="M5 23L5 14M5 23L14 18M5 23L13 24" stroke="#888" stroke-width="1" fill="none"/><path d="M12 13L12 3M12 13L21 10M12 13L7 17" stroke="#d01010" stroke-width="1.1" fill="none"/><path d="M10 4L12 0L14 4Z M19 8L23 10L19 12Z" fill="#d01010"/><path d="M3 6L9 3" stroke="#f08010" stroke-width="2"/></svg>
<svg style="left:209px;top:156px" width="24" height="24" viewBox="0 0 24 24"><path d="M9 15L9 3" stroke="#1a2ae0" stroke-width="1.3"/><path d="M7 5L9 0L11 5Z" fill="#1a2ae0"/><path d="M9 15L21 8" stroke="#20b020" stroke-width="1.3"/><path d="M19 6L24 7L20 10Z" fill="#20b020"/><path d="M9 15L19 20" stroke="#d01010" stroke-width="1.3"/><circle cx="9" cy="15" r="1.2" fill="#d01010"/><text x="0" y="24" font-family="Liberation Sans" font-weight="bold" font-size="6.5" fill="#111">(0,0,0)</text></svg>
<svg style="left:240px;top:156px" width="24" height="24" viewBox="0 0 24 24"><path d="M8 14L8 2M8 14L20 10M8 14L20 19" stroke="#888" stroke-width="1" fill="none"/><path d="M8 15L20 18" stroke="#d01010" stroke-width="1.2"/><path d="M17 17L24 15" stroke="#f08010" stroke-width="2"/><text x="3" y="23" font-family="Liberation Sans" font-weight="bold" font-size="8" fill="#111">XC</text></svg>
<svg style="left:272px;top:156px" width="24" height="24" viewBox="0 0 24 24"><path d="M4 17L4 3M4 17L16 22M4 17L13 13" stroke="#888" stroke-width="1" fill="none"/><path d="M4 17L12 13" stroke="#d01010" stroke-width="1.2"/><path d="M13 14L20 17" stroke="#f08010" stroke-width="2"/><text x="10" y="9" font-family="Liberation Sans" font-weight="bold" font-size="8" fill="#111">YC</text></svg>
<svg style="left:302px;top:156px" width="24" height="24" viewBox="0 0 24 24"><path d="M4 21L4 8M4 21L14 16M4 21L15 24" stroke="#d01010" stroke-width="1.1" fill="none"/><path d="M2 9L4 5L6 9Z M12 14L16 15L13 18Z" fill="#d01010"/><g transform="translate(11,0) scale(0.55)"><rect x="2" y="2" width="18" height="18" fill="#3a50b0" stroke="#1a2a70" stroke-width="1"/><rect x="5" y="3" width="12" height="8" fill="#fff"/><rect x="7" y="14" width="8" height="6" fill="#1a1a3a"/><rect x="8.5" y="15" width="2.5" height="4" fill="#5a7ad0"/></g></svg>
<svg style="left:333px;top:156px" width="24" height="24" viewBox="0 0 24 24"><path d="M3 9Q3 2 11 2Q20 2 19 8Q19 12 14 11Q11 11 12 15Q9 17 5 14Q3 12 3 9Z" fill="#fff0d0" stroke="#c09040" stroke-width="0.8"/><circle cx="8" cy="6" r="1.5" fill="#30a0f0"/><circle cx="13" cy="5" r="1.5" fill="#f0d020"/><path d="M4 22L10 14" stroke="#f0c020" stroke-width="3"/><circle cx="11" cy="14" r="3" fill="#f0c020"/><path d="M12 14L18 8L24 14L18 20Z" fill="#fff" stroke="#1a2aa0" stroke-width="1.5"/><path d="M18 8L18 20L24 14Z" fill="#2a4ad0"/></svg>
<svg style="left:363px;top:156px" width="24" height="24" viewBox="0 0 24 24"><path d="M1 5L7 9L1 13Z" fill="#20b040"/><path d="M1 13L7 17L1 22Z" fill="#e02010"/><path d="M8 13L15 6L22 13L15 20Z" fill="#fff" stroke="#1a2aa0" stroke-width="1.5"/><path d="M15 6L15 20L22 13Z" fill="#2a4ad0"/></svg>
<svg style="left:412px;top:159px" width="9" height="8" viewBox="0 0 9 8"><path d="M0.5 1L3.5 4L0.5 7M4.5 1L7.5 4L4.5 7" fill="none" stroke="#000" stroke-width="1.5"/></svg>
<svg style="left:414px;top:176.5px" width="6" height="4" viewBox="0 0 6 4"><path d="M0 0L6 0L3 3.5Z" fill="#000"/></svg>
<div class="a" style="left:424px;top:152px;width:1px;height:34px;background:#b8b8b8"></div>
<div class="a" style="left:425px;top:152px;width:1px;height:34px;background:#fafafa"></div>
<div class="a" style="left:430px;top:158px;width:2px;height:22px;background:repeating-linear-gradient(#8a8a8a 0px,#8a8a8a 1px,#fff 1px,#fff 2px,transparent 2px,transparent 4px)"></div>
<svg style="left:436px;top:156px" width="24" height="24" viewBox="0 0 24 24"><path d="M3 7L12 2L21 7L12 11Z" fill="#e0b0f0"/><path d="M12 11L21 7L21 18L12 22Z" fill="#a050d0"/><path d="M3 7L12 11L12 22L3 18Z" fill="#f8b020" stroke="#e02010" stroke-width="0.8"/><path d="M3 7L12 2L21 7L21 18L12 22L3 18Z" fill="none" stroke="#9040c0" stroke-width="0.5"/><path d="M14 9L14 23M7 16L21 16" stroke="#fff" stroke-width="3.5"/><path d="M14 9L14 23M7 16L21 16" stroke="#111" stroke-width="1.1"/><path d="M11 11L14 8L17 11M11 21L14 24L17 21M9 13L6 16L9 19M19 13L22 16L19 19" fill="none" stroke="#111" stroke-width="1"/></svg>
<svg style="left:467px;top:156px" width="24" height="24" viewBox="0 0 24 24"><path d="M3 7L12 2L21 7L12 11Z" fill="#e0b0f0"/><path d="M12 11L21 7L21 18L12 22Z" fill="#a050d0"/><path d="M3 7L12 11L12 22L3 18Z" fill="#f8b020" stroke="#e02010" stroke-width="0.8"/><path d="M3 7L12 2L21 7L21 18L12 22L3 18Z" fill="none" stroke="#9040c0" stroke-width="0.5"/><path d="M7 19L14 16L21 19L14 22Z" fill="#fff" stroke="#111" stroke-width="1"/><path d="M14 19L14 9" stroke="#fff" stroke-width="3.5"/><path d="M14 19L14 9" stroke="#111" stroke-width="1.2"/><path d="M11 12L14 7L17 12Z" fill="#fff" stroke="#111" stroke-width="1"/></svg>
<svg style="left:498px;top:156px" width="24" height="24" viewBox="0 0 24 24"><path d="M3 7L12 2L21 7L12 11Z" fill="#e0b0f0"/><path d="M12 11L21 7L21 18L12 22Z" fill="#a050d0"/><path d="M3 7L12 11L12 22L3 18Z" fill="#f8b020" stroke="#e02010" stroke-width="0.8"/><path d="M3 7L12 2L21 7L21 18L12 22L3 18Z" fill="none" stroke="#9040c0" stroke-width="0.5"/><path d="M10 11L17 11L17 21L10 21Z" fill="#fff" stroke="#111" stroke-width="1.1"/><path d="M14 13L22 13L22 23L14 23Z" fill="#fff" stroke="#111" stroke-width="1.1"/></svg>
<svg style="left:529px;top:156px" width="24" height="24" viewBox="0 0 24 24"><path d="M4 4L4 18Q12 24 20 18L20 4Z" fill="#f8b030" stroke="#e02010" stroke-width="0.7"/><ellipse cx="12" cy="4" rx="8" ry="3" fill="#c080e0"/><path d="M6 6L6 16" stroke="#ffe890" stroke-width="3"/><path d="M10 22L16 13L22 22Z" fill="#fff"/><path d="M12 21L16 15L20 21Z" fill="#f08010" stroke="#111" stroke-width="1.3"/></svg>
<svg style="left:560px;top:156px" width="24" height="24" viewBox="0 0 24 24"><path d="M3 7L12 2L21 7L12 11Z" fill="#e0b0f0"/><path d="M12 11L21 7L21 18L12 22Z" fill="#a050d0"/><path d="M3 7L12 11L12 22L3 18Z" fill="#f8b020" stroke="#e02010" stroke-width="0.8"/><path d="M3 7L12 2L21 7L21 18L12 22L3 18Z" fill="none" stroke="#9040c0" stroke-width="0.5"/><path d="M14 11L22 11L22 23L14 23Z" fill="#fff"/><path d="M15 12L21 12L21 16L17 16L17 17L21 17L21 22L15 22" fill="none" stroke="#111" stroke-width="1.1"/><path d="M16 14L19 14M16 20L19 20" stroke="#111" stroke-width="0.8"/></svg>
<svg style="left:591px;top:156px" width="24" height="24" viewBox="0 0 24 24"><path d="M3 9Q5 3 12 2L21 7L12 11Q6 8 3 9Z" fill="#d090f0"/><path d="M3 9Q8 7 12 11L12 22L3 18Z" fill="#f8c040" stroke="#e02010" stroke-width="0.8"/><path d="M12 11L21 7L21 18L12 22Z" fill="#a050d0"/><path d="M3 9Q5 3 12 2L16 5Q9 5 7 9Z" fill="#ffd050" stroke="#e02010" stroke-width="0.8"/><path d="M10 22L16 13L22 22Z" fill="#fff"/><path d="M12 21L16 15L20 21Z" fill="none" stroke="#111" stroke-width="1.3"/></svg>
<svg style="left:622px;top:156px" width="24" height="24" viewBox="0 0 24 24"><path d="M3 7L9 3L21 7L12 11Z" fill="#d090f0"/><path d="M3 7L12 11L12 22L3 18Z" fill="#c070e0" stroke="#9040c0" stroke-width="0.5"/><path d="M12 11L21 7L21 18L12 22Z" fill="#a050d0"/><path d="M4 10L9 3L16 6L10 14Z" fill="#ffc040" stroke="#e02010" stroke-width="1"/><path d="M10 22L16 13L22 22Z" fill="#fff"/><path d="M12 21L16 15L20 21Z" fill="none" stroke="#111" stroke-width="1.3"/></svg>
<svg style="left:653px;top:167.5px" width="6" height="4" viewBox="0 0 6 4"><path d="M0 0L6 0L3 3.5Z" fill="#000"/></svg>
<svg style="left:665px;top:156px" width="24" height="24" viewBox="0 0 24 24"><path d="M3 7L12 2L21 7L12 11Z" fill="#e0b0f0"/><path d="M12 11L21 7L21 18L12 22Z" fill="#a050d0"/><path d="M3 7L12 11L12 22L3 18Z" fill="#f8b020" stroke="#e02010" stroke-width="0.8"/><path d="M3 7L12 2L21 7L21 18L12 22L3 18Z" fill="none" stroke="#9040c0" stroke-width="0.5"/><path d="M10 11L22 23M22 11L10 23" stroke="#fff" stroke-width="4"/><path d="M10 11L22 23M22 11L10 23" stroke="#111" stroke-width="2"/></svg>
<svg style="left:696px;top:156px" width="24" height="24" viewBox="0 0 24 24"><path d="M3 7L12 2L21 7L12 11Z" fill="#e0b0f0"/><path d="M12 11L21 7L21 18L12 22Z" fill="#a050d0"/><path d="M3 7L12 11L12 22L3 18Z" fill="#f8b020" stroke="#e02010" stroke-width="0.8"/><path d="M3 7L12 2L21 7L21 18L12 22L3 18Z" fill="none" stroke="#9040c0" stroke-width="0.5"/><path d="M10 9L16 9L16 18L10 18Z" fill="#fff" stroke="#2a2a8a" stroke-width="0.9"/><path d="M14 13L21 13L21 23L14 23Z" fill="#fff" stroke="#2a2a8a" stroke-width="0.9"/><path d="M11.5 12L14.5 12M11.5 14L14.5 14M15.5 17L19.5 17M15.5 19L19.5 19" stroke="#2a2a8a" stroke-width="0.6"/></svg>
<svg style="left:727px;top:167.5px" width="6" height="4" viewBox="0 0 6 4"><path d="M0 0L6 0L3 3.5Z" fill="#000"/></svg>
<svg style="left:740px;top:156px" width="24" height="24" viewBox="0 0 24 24"><path d="M3 7L12 2L21 7L12 11Z" fill="#e0b0f0"/><path d="M12 11L21 7L21 18L12 22Z" fill="#a050d0"/><path d="M3 7L12 11L12 22L3 18Z" fill="#f8b020" stroke="#e02010" stroke-width="0.8"/><path d="M3 7L12 2L21 7L21 18L12 22L3 18Z" fill="none" stroke="#9040c0" stroke-width="0.5"/><path d="M14 10L23 10L23 23L14 23Z" fill="#fff"/><path d="M15 11L22 11L22 16L15 16ZM15 17L22 17L22 22L15 22Z" fill="#dfe8d8" stroke="#111" stroke-width="1"/></svg>
<svg style="left:770px;top:167.5px" width="6" height="4" viewBox="0 0 6 4"><path d="M0 0L6 0L3 3.5Z" fill="#000"/></svg>
<svg style="left:782px;top:156px" width="24" height="24" viewBox="0 0 24 24"><path d="M3 7L12 2L21 7L12 11Z" fill="#e0b0f0"/><path d="M12 11L21 7L21 18L12 22Z" fill="#a050d0"/><path d="M3 7L12 11L12 22L3 18Z" fill="#f8b020" stroke="#e02010" stroke-width="0.8"/><path d="M3 7L12 2L21 7L21 18L12 22L3 18Z" fill="none" stroke="#9040c0" stroke-width="0.5"/><rect x="11" y="9" width="8" height="8" fill="#fff" opacity="0.9"/><path d="M13 11L17 15M17 11L13 15" stroke="#111" stroke-width="1.1"/><rect x="6" y="17" width="18" height="6" fill="#fff" opacity="0.9"/><path d="M7 20L23 20M7 17.5L7 22.5M23 17.5L23 22.5" stroke="#111" stroke-width="1.3"/><path d="M9.5 18L7.5 20L9.5 22M20.5 18L22.5 20L20.5 22" fill="none" stroke="#111" stroke-width="1"/></svg>
<svg style="left:813px;top:167.5px" width="6" height="4" viewBox="0 0 6 4"><path d="M0 0L6 0L3 3.5Z" fill="#000"/></svg>
<svg style="left:825px;top:156px" width="24" height="24" viewBox="0 0 24 24"><path d="M3 7Q8 2 12 2Q17 2 21 7L21 16Q16 23 12 23Q6 22 3 16Z" fill="#a898b0" stroke="#9888a0" stroke-width="0.8"/><path d="M3 7L12 10L21 7M12 10L12 23" fill="none" stroke="#b0a0b8" stroke-width="0.8"/></svg>
<svg style="left:856px;top:167.5px" width="6" height="4" viewBox="0 0 6 4"><path d="M0 0L6 0L3 3.5Z" fill="#000"/></svg>
<svg style="left:868px;top:156px" width="24" height="24" viewBox="0 0 24 24"><path d="M3 7L12 2L21 7L12 11Z" fill="#e0b0f0"/><path d="M12 11L21 7L21 18L12 22Z" fill="#a050d0"/><path d="M3 7L12 11L12 22L3 18Z" fill="#f8b020" stroke="#e02010" stroke-width="0.8"/><path d="M3 7L12 2L21 7L21 18L12 22L3 18Z" fill="none" stroke="#9040c0" stroke-width="0.5"/><rect x="11" y="12" width="12" height="12" fill="#fff"/><path d="M12.5 14L19 14L19 20L12.5 20ZM15 16.5L21 16.5L21 22.5L15 22.5Z" fill="none" stroke="#111" stroke-width="1.1"/><rect x="11" y="12" width="2" height="2" fill="#1a1ad0"/><rect x="21" y="12" width="2" height="2" fill="#1a1ad0"/><rect x="11" y="22" width="2" height="2" fill="#1a1ad0"/><rect x="21" y="22" width="2" height="2" fill="#1a1ad0"/></svg>
<svg style="left:899px;top:156px" width="24" height="24" viewBox="0 0 24 24"><path d="M3 7L12 2L21 7L21 18L12 22L3 18Z" fill="#a8a0a8" stroke="#a098a0" stroke-width="0.6"/><path d="M3 7L12 11L21 7M12 11L12 22" fill="none" stroke="#b8b0b8" stroke-width="0.8"/><path d="M14 4L14 18" stroke="#c89080" stroke-width="0.8"/><path d="M1 23L8 14L15 23Z" fill="none" stroke="#888" stroke-width="1.6"/></svg>
<svg style="left:930px;top:156px" width="24" height="24" viewBox="0 0 24 24"><path d="M3 7L12 2L21 7L21 18L12 22L3 18Z" fill="#a898a0" stroke="#9a8a98" stroke-width="0.6"/><path d="M3 7L12 11L21 7M12 11L12 22" fill="none" stroke="#b8a8b0" stroke-width="0.8"/><path d="M3 7L3 18L12 22L12 11Z" fill="#b8a890" opacity="0.6"/><path d="M13 12L21 21" stroke="#777" stroke-width="2"/><path d="M12 9L14 13L10 12Z" fill="#888"/></svg>
<svg style="left:961px;top:167.5px" width="6" height="4" viewBox="0 0 6 4"><path d="M0 0L6 0L3 3.5Z" fill="#000"/></svg>
<div class="a" style="left:971px;top:154px;width:30px;height:29px;border-radius:3px;background:#fafafa;border:1px solid #6a6a6a"></div>
<svg style="left:974px;top:157px" width="24" height="24" viewBox="0 0 24 24"><circle cx="12" cy="12" r="10.5" fill="#c8c8c8" stroke="#555" stroke-width="1"/><circle cx="12" cy="12" r="8.5" fill="#d8f0ff" stroke="#3a5a8a" stroke-width="1"/><path d="M12 5L12 12L17 12" fill="none" stroke="#111" stroke-width="1.6"/><path d="M12 4L12 5M12 19L12 20M4 12L5 12M19 12L20 12" stroke="#333" stroke-width="1"/></svg>
<svg style="left:1004px;top:159px" width="9" height="8" viewBox="0 0 9 8"><path d="M0.5 1L3.5 4L0.5 7M4.5 1L7.5 4L4.5 7" fill="none" stroke="#000" stroke-width="1.5"/></svg>
<svg style="left:1004px;top:176.5px" width="6" height="4" viewBox="0 0 6 4"><path d="M0 0L6 0L3 3.5Z" fill="#000"/></svg>
<div class="a" style="left:-3px;top:193px;width:108px;height:15px;border-radius:3px;background:#fff;border:1px solid #6a6a6a"></div>
<div class="t" style="left:-1px;top:195px;color:#000;font-size:12px">没有选择过滤器</div>
<div class="a" style="left:88px;top:194px;width:16px;height:13px;border-radius:0 3px 3px 0;background:linear-gradient(#cfe2f8,#5a9ae8 50%,#4a90e8 60%,#9ad0f8);border-left:1px solid #7a9ac0"></div>
<svg style="left:90px;top:197px" width="12" height="7" viewBox="0 0 12 7"><path d="M1 0L11 0L6 6Z" fill="#111"/></svg>
<div class="a" style="left:115px;top:193px;width:115px;height:15px;border-radius:3px;background:#fff;border:1px solid #6a6a6a"></div>
<div class="t" style="left:117px;top:195px;color:#000;font-size:12px">仅在工作部件内部</div>
<div class="a" style="left:213px;top:194px;width:16px;height:13px;border-radius:0 3px 3px 0;background:linear-gradient(#cfe2f8,#5a9ae8 50%,#4a90e8 60%,#9ad0f8);border-left:1px solid #7a9ac0"></div>
<svg style="left:215px;top:197px" width="12" height="7" viewBox="0 0 12 7"><path d="M1 0L11 0L6 6Z" fill="#111"/></svg>
<svg style="left:235px;top:189px" width="22" height="22" viewBox="0 0 24 24"><path d="M2 10L8 7L8 20L2 20Z" fill="#a8a8a8"/><circle cx="13" cy="8" r="4" fill="none" stroke="#b0a890" stroke-width="2"/><circle cx="14" cy="15" r="4" fill="none" stroke="#b0a890" stroke-width="2"/><path d="M5 10L11 8" stroke="#c0b8a0" stroke-width="1"/></svg>
<div class="a" style="left:260px;top:188px;width:1px;height:23px;background:#b8b8b8"></div>
<div class="a" style="left:261px;top:188px;width:1px;height:23px;background:#fafafa"></div>
<svg style="left:266px;top:189px" width="22" height="22" viewBox="0 0 24 24"><rect x="2" y="2" width="16" height="16" fill="none" stroke="#e02020" stroke-width="1"/><circle cx="9" cy="9" r="3" fill="none" stroke="#333" stroke-width="1"/><path d="M9 3L9 15M3 9L15 9" stroke="#333" stroke-width="0.8"/><path d="M10 12L20 12L16 17L16 21L14 21L14 17Z" fill="#f0d020" stroke="#a08010" stroke-width="0.6"/></svg>
<svg style="left:287px;top:198.5px" width="6" height="4" viewBox="0 0 6 4"><path d="M0 0L6 0L3 3.5Z" fill="#000"/></svg>
<svg style="left:297px;top:190px" width="22" height="22" viewBox="0 0 24 24"><path d="M4 14L15 14L15 6" fill="none" stroke="#a0a8b0" stroke-width="2.2"/><path d="M1 14L6 10L6 18Z" fill="#a0a8b0"/></svg>
<svg style="left:319px;top:189px" width="22" height="22" viewBox="0 0 24 24"><path d="M2 14L10 6L20 10L14 18L4 18Z" fill="#fff" stroke="#333" stroke-width="1.1"/><path d="M10 6L20 10L20 13L14 18" fill="#c8c8c8" stroke="#333" stroke-width="1"/><path d="M8 9L14 12" stroke="#e02020" stroke-width="2"/></svg>
<svg style="left:343px;top:189px" width="22" height="22" viewBox="0 0 24 24"><path d="M3 7Q4 2 9 3" fill="none" stroke="#8a8a8a" stroke-width="1.6"/><path d="M1 6L5 8L2 10Z" fill="#8a8a8a"/><circle cx="12" cy="13" r="3.5" fill="none" stroke="#b09090" stroke-width="1"/><path d="M12 7L12 19M6 13L18 13" stroke="#909090" stroke-width="1"/></svg>
<svg style="left:367px;top:189px" width="22" height="22" viewBox="0 0 24 24"><path d="M2 5Q6 1 10 5Q12 8 15 6" fill="none" stroke="#8a8a8a" stroke-width="2"/><rect x="12" y="9" width="5" height="10" fill="#a0a0a0"/><path d="M10 10L14 14" stroke="#909090" stroke-width="1.4"/></svg>
<div class="a" style="left:390px;top:188px;width:1px;height:23px;background:#b8b8b8"></div>
<div class="a" style="left:391px;top:188px;width:1px;height:23px;background:#fafafa"></div>
<svg style="left:395px;top:190px" width="22" height="22" viewBox="0 0 24 24"><rect x="2" y="3" width="15" height="14" fill="none" stroke="#111" stroke-width="1.1" stroke-dasharray="2 1.5"/><circle cx="2" cy="3" r="1.6" fill="#e01010"/><circle cx="17" cy="17" r="1.6" fill="#e01010"/></svg>
<svg style="left:419px;top:198.5px" width="6" height="4" viewBox="0 0 6 4"><path d="M0 0L6 0L3 3.5Z" fill="#000"/></svg>
<div class="a" style="left:431px;top:188px;width:1px;height:23px;background:#b8b8b8"></div>
<div class="a" style="left:432px;top:188px;width:1px;height:23px;background:#fafafa"></div>
<div class="a" style="left:437px;top:193px;width:116px;height:15px;border-radius:3px;background:#d8d8d8;border:1px solid #a8a8a8"></div>
<div class="t" style="left:439px;top:195px;color:#a8a8a8;font-size:12px">自动判断曲线</div>
<div class="a" style="left:536px;top:194px;width:16px;height:13px;border-radius:0 3px 3px 0;background:linear-gradient(#f4f4f4,#d0d0d0);border-left:1px solid #b0b0b0"></div>
<svg style="left:538px;top:197px" width="12" height="7" viewBox="0 0 12 7"><path d="M1 0L11 0L6 6Z" fill="#a8a8a8"/><path d="M3 1L6 4.5L9 1" fill="none" stroke="#fff" stroke-width="0.8"/></svg>
<svg style="left:559px;top:190px" width="22" height="22" viewBox="0 0 24 24"><path d="M6 2L6 20M16 2L16 20M1 8L21 8" stroke="#a07070" stroke-width="1.3"/></svg>
<div class="a" style="left:582px;top:188px;width:1px;height:23px;background:#b8b8b8"></div>
<div class="a" style="left:583px;top:188px;width:1px;height:23px;background:#fafafa"></div>
<div class="a" style="left:588px;top:188px;width:23px;height:23px;border-radius:3px;background:#fafafa;border:1px solid #6a6a6a"></div>
<svg style="left:589px;top:189px" width="22" height="22" viewBox="0 0 24 24"><path d="M3 7L12 3L21 7L12 11Z" fill="#b8d8ff"/><path d="M3 7L12 11L12 21L3 17Z" fill="#4a90f0"/><path d="M12 11L21 7L21 17L12 21Z" fill="#2a70e0"/><path d="M12 3L12 11M3 7L12 11" stroke="#e02020" stroke-width="0.8" stroke-dasharray="1.2 1"/></svg>
<svg style="left:1002px;top:203.5px" width="6" height="4" viewBox="0 0 6 4"><path d="M0 0L6 0L3 3.5Z" fill="#000"/></svg>
<svg style="left:996px;top:217px" width="17" height="17" viewBox="0 0 24 24"><rect x="3" y="3" width="13" height="11" fill="#d8e8ff" stroke="#1a3a8a" stroke-width="1"/><rect x="5" y="6" width="9" height="6" fill="#3a70d0"/><path d="M0 3L0 0L3 0M16 0L19 0L19 3M0 14L0 17L3 17M16 17L19 17L19 14" fill="none" stroke="#333" stroke-width="1"/></svg>
<div class="a" style="left:0px;top:235px;width:1013px;height:17px;background:linear-gradient(#9a9a9a 0px,#9a9a9a 1px,#c4c4c4 1px,#bcbcbc 5px,#9a9a9a 5px,#9a9a9a 6px,#c8c8c8 6px,#d8d8d8 9px,#f0f0f0 9px,#f0f0f0 10px,#d4d4d4 10px,#c8c8c8 14px,#6a6a6a 14px,#6a6a6a 15px,#b0a890 15px,#b0a890 16px,#8a7860 16px)"></div>
<div class="a" style="left:0px;top:252px;width:1013px;height:512px;background:linear-gradient(#0280c0 0px,#e6e8ea 386px,#e6e8ea 512px)"></div>
<div class="a" style="left:0px;top:764px;width:1013px;height:1px;background:#f4f0e0"></div>
<div class="a" style="left:0px;top:765px;width:1013px;height:3px;background:#3a7ad0"></div>
<svg style="left:0;top:0" width="1013" height="768" viewBox="0 0 1013 768"><defs><clipPath id="vp"><rect x="0" y="252" width="1013" height="512"/></clipPath></defs><g clip-path="url(#vp)"><polygon points="460.0,364.0 457.2,385.8 449.0,406.5 435.8,425.1 418.2,440.6 397.2,452.3 373.7,459.5 349.0,462.0 324.3,459.5 300.8,452.3 279.8,440.6 262.2,425.1 249.0,406.5 240.8,385.8 238.0,364.0 240.8,342.2 249.0,321.5 262.2,302.9 279.8,287.4 300.8,275.7 324.3,268.5 349.0,266.0 373.7,268.5 397.2,275.7 418.2,287.4 435.8,302.9 449.0,321.5 457.2,342.2" fill="none" stroke="#f5a050" stroke-width="3"/>
<polygon points="273.0,726.0 271.3,737.1 266.3,747.5 258.4,756.4 248.0,763.2 235.9,767.5 223.0,769.0 210.1,767.5 198.0,763.2 187.6,756.4 179.7,747.5 174.7,737.1 173.0,726.0 174.7,714.9 179.7,704.5 187.6,695.6 198.0,688.8 210.1,684.5 223.0,683.0 235.9,684.5 248.0,688.8 258.4,695.6 266.3,704.5 271.3,714.9" fill="none" stroke="#f5a050" stroke-width="3"/>
<path d="M403 252L389 290" stroke="#f5a050" stroke-width="3"/>
<path d="M317 458L241 684" stroke="#f5a050" stroke-width="3"/>
<path d="M205 509L389 489" stroke="#f5a050" stroke-width="3"/>
<path d="M172 608L339 640" stroke="#f5a050" stroke-width="3"/>
<path d="M122 763L197 738" stroke="#f5a050" stroke-width="3"/>
<path d="M308.0 457.0L327.0 457.0" stroke="#f5a050" stroke-width="3.2"/><path d="M310.8 450.3L324.2 463.7" stroke="#f5a050" stroke-width="3.2"/><path d="M317.5 447.5L317.5 466.5" stroke="#f5a050" stroke-width="3.2"/><path d="M324.2 450.3L310.8 463.7" stroke="#f5a050" stroke-width="3.2"/><path d="M251.5 625.0L270.5 625.0" stroke="#f5a050" stroke-width="3.2"/><path d="M254.3 618.3L267.7 631.7" stroke="#f5a050" stroke-width="3.2"/><path d="M261.0 615.5L261.0 634.5" stroke="#f5a050" stroke-width="3.2"/><path d="M267.7 618.3L254.3 631.7" stroke="#f5a050" stroke-width="3.2"/><path d="M167.5 746.0L186.5 746.0" stroke="#f5a050" stroke-width="3.2"/><path d="M170.3 739.3L183.7 752.7" stroke="#f5a050" stroke-width="3.2"/><path d="M177.0 736.5L177.0 755.5" stroke="#f5a050" stroke-width="3.2"/><path d="M183.7 739.3L170.3 752.7" stroke="#f5a050" stroke-width="3.2"/>
<g stroke="#8a7e58" stroke-width="2" fill="none" stroke-linecap="butt">
<path d="M215 559L277 571" stroke="#7e8a58"/>
<path d="M188 554L215 554Q218 559 213 565Z" stroke-linejoin="round"/>
<path d="M233.5 557L233.5 563" />
<path d="M277 571L271.5 549" stroke="#857a78"/>
<path d="M266 525L275 537Q274 543 268 542Q263 539 264 534Z" stroke-linejoin="round"/>
<path d="M303 499L305 514Q302 518 298 515Q296 512 298 506Z" stroke-linejoin="round"/>
<path d="M244.5 526L243.8 531.6M253.8 523.7L260.2 525.1M227.3 540.9L228.7 546.6M233.7 540.9L240.2 541.6L238.7 547.3M249.5 543.8L255.9 545.2M265.2 546.6L271.7 548M269.5 527.3L276 528M278.9 525.8L277.4 532.3M286 530.1L291.7 530.9M290.3 524.4L291.7 528M283.2 516.5L286.7 508.7L288.9 515.8" stroke-width="2.2"/>
<path d="M268 540L271 544L273 539" stroke-width="1.6"/>
</g>
<text x="184" y="555" font-family="Liberation Sans" font-size="9" fill="#8a7e58">Y</text>
<text x="265" y="523" font-family="Liberation Sans" font-size="9" fill="#8a7e58">Z</text>
<text x="307" y="491" font-family="Liberation Sans" font-size="8" fill="#8a7e58">X</text>
<text x="243" y="566" font-family="Liberation Sans" font-size="9.5" fill="#f5a050">YC</text>
<text x="274" y="555" font-family="Liberation Sans" font-size="9.5" fill="#f5a050">ZC</text>
<text x="291" y="540" font-family="Liberation Sans" font-size="9.5" fill="#f5a050">XC</text>
<path d="M45 711L53 689" stroke="#f01010" stroke-width="1.8"/>
<path d="M45 711L20 707" stroke="#10c070" stroke-width="2"/>
<path d="M45 711L41 697" stroke="#2020e0" stroke-width="1.6"/>
<circle cx="45" cy="711" r="2" fill="#888"/>
<text x="53" y="688" font-family="Liberation Sans" font-size="7" fill="#e02020">X</text>
<text x="9" y="708" font-family="Liberation Sans" font-size="7" fill="#20b060">Y</text>
<text x="38" y="696" font-family="Liberation Sans" font-size="7" fill="#2020e0">Z</text>
</g></svg>
<div class="a" style="left:379px;top:330px;width:250px;height:109px;border-radius:5px 5px 0 0;background:linear-gradient(#f4f4f4,#e8e8e8);border:1px solid #8a8a8a;box-shadow:1px 1px 0 #b0b0b0"></div>
<div class="a" style="left:379px;top:330px;width:250px;height:25px;border-radius:5px 5px 0 0;background:linear-gradient(#4a4a4a 0px,#2a2a2a 2px,#151515 8px,#151515 25px)"></div>
<div class="t" style="left:387px;top:336px;color:#fff;font-size:13.6px;font-weight:bold">无法添加至截面</div>
<svg style="left:388px;top:366px" width="32" height="32" viewBox="0 0 32 32"><circle cx="16" cy="16" r="15" fill="url(#gred)" stroke="#700" stroke-width="0.6"/><path d="M10 10L22 22M22 10L10 22" stroke="#fff" stroke-width="3.6"/><ellipse cx="13" cy="9" rx="7" ry="4" fill="#fff" opacity="0.25"/></svg>
<div class="t" style="left:434px;top:366px;color:#000;font-size:12px">选定对象将生成一个自相交的截面</div>
<div class="t" style="left:434px;top:379px;color:#000;font-size:12px">提示：修改或删除无效曲线</div>
<div class="a" style="left:473px;top:408px;width:61px;height:19px;border-radius:3px;border:1px solid #3a6a3a;background:linear-gradient(#f0fff0,#c0f0b0 45%,#80d870 55%,#b0f0a0)"></div>
<div class="a" style="left:475px;top:410px;width:57px;height:15px;border:1px dotted #222"></div>
<div class="t" style="left:482px;top:411px;color:#000;font-size:12px">确定 <span style="font-family:Liberation Sans;font-size:11px">(<u>O</u>)</span></div>
<div class="a" style="left:728px;top:256px;width:285px;height:496px;background:#ebebeb;border-left:1px solid #8a8a8a"></div>
<div class="a" style="left:831px;top:251px;width:25px;height:5px;background:#f8f8f8"></div>
<div class="a" style="left:728px;top:752px;width:285px;height:9px;background:#1c1c1c;border-radius:0 0 0 8px"></div>
<div class="a" style="left:1008px;top:263px;width:1px;height:454px;background:#8c8c8c"></div>
<div class="a" style="left:856px;top:252px;width:157px;height:4px;background:#e4e4e4"></div>
<div class="a" style="left:856px;top:236px;width:157px;height:19px;background:#111"></div>
<div class="a" style="left:875px;top:237px;width:18px;height:18px;background:linear-gradient(#5a5a5a 0px,#3a3a3a 8px,#1a1a1a 9px,#111 18px)"></div>
<div class="a" style="left:894px;top:237px;width:41px;height:18px;background:linear-gradient(#5a5a5a 0px,#3a3a3a 8px,#1a1a1a 9px,#111 18px)"></div>
<div class="a" style="left:936px;top:237px;width:19px;height:18px;background:linear-gradient(#5a5a5a 0px,#3a3a3a 8px,#1a1a1a 9px,#111 18px)"></div>
<div class="a" style="left:956px;top:237px;width:20px;height:18px;background:linear-gradient(#5a5a5a 0px,#3a3a3a 8px,#1a1a1a 9px,#111 18px)"></div>
<div class="a" style="left:977px;top:237px;width:18px;height:18px;background:linear-gradient(#5a5a5a 0px,#3a3a3a 8px,#1a1a1a 9px,#111 18px)"></div>
<div class="a" style="left:856px;top:236px;width:19px;height:19px;background:linear-gradient(#f4f4f4,#d4d4d4);border:1px solid #8a8a8a"></div>
<div class="a" style="left:996px;top:236px;width:17px;height:19px;background:linear-gradient(#f4f4f4,#d4d4d4);border:1px solid #8a8a8a"></div>
<svg style="left:859px;top:239px" width="14" height="14" viewBox="0 0 14 14"><path d="M9.5 2L4 7L9.5 12" fill="none" stroke="#6a6a6a" stroke-width="2.6"/></svg>
<svg style="left:998px;top:239px" width="14" height="14" viewBox="0 0 14 14"><path d="M3.5 2L9 7L3.5 12" fill="none" stroke="#6a6a6a" stroke-width="2.6"/></svg>
<svg style="left:876px;top:239px" width="16" height="15" viewBox="0 0 16 15"><path d="M3 3L11 11" stroke="#fff" stroke-width="2.8"/><path d="M6 13L14 13L14 5Z" fill="#fff"/></svg>
<div class="t" style="left:899px;top:238px;color:#fff;font-size:15px;font-weight:bold">拉伸</div>
<svg style="left:937px;top:239px" width="17" height="15" viewBox="0 0 17 15"><path d="M6.5 4.5A4.2 4.2 0 1 1 4.5 11" fill="none" stroke="#fff" stroke-width="2.6"/></svg>
<div class="a" style="left:960px;top:244px;width:12px;height:3px;background:#fff"></div>
<svg style="left:979px;top:239px" width="16" height="15" viewBox="0 0 16 15"><path d="M3 3L13 13M13 3L3 13" stroke="#fff" stroke-width="2.8"/></svg>
<div class="a" style="left:735px;top:263px;width:273px;height:23px;background:linear-gradient(#fbfbfb 0px,#f2f2f2 11px,#e4e4e4 12px,#d8d8d8 22px);border-bottom:1px solid #8a8a8a"></div>
<div class="a" style="left:985px;top:264px;width:1px;height:21px;background:#a8a8a8"></div>
<div class="a" style="left:986px;top:264px;width:1px;height:21px;background:#fff"></div>
<div class="t" style="left:741px;top:268px;color:#000;font-size:13px;font-weight:bold">截面</div>
<svg style="left:990px;top:268px" width="14" height="12" viewBox="0 0 14 12"><path d="M1.5 9.5L7 3.5L12.5 9.5" fill="none" stroke="#555" stroke-width="2.6"/></svg>
<div class="a" style="left:735px;top:286px;width:273px;height:48px;background:#d4d4d4;border-left:1px solid #a8a8a8"></div>
<div class="a" style="left:735px;top:334px;width:273px;height:23px;background:linear-gradient(#fbfbfb 0px,#f2f2f2 11px,#e4e4e4 12px,#d8d8d8 22px);border-bottom:1px solid #8a8a8a"></div>
<div class="a" style="left:985px;top:335px;width:1px;height:21px;background:#a8a8a8"></div>
<div class="a" style="left:986px;top:335px;width:1px;height:21px;background:#fff"></div>
<div class="t" style="left:741px;top:339px;color:#000;font-size:13px;font-weight:bold">方向</div>
<svg style="left:990px;top:339px" width="14" height="12" viewBox="0 0 14 12"><path d="M1.5 9.5L7 3.5L12.5 9.5" fill="none" stroke="#555" stroke-width="2.6"/></svg>
<div class="a" style="left:735px;top:357px;width:273px;height:73px;background:#d4d4d4;border-left:1px solid #a8a8a8"></div>
<div class="a" style="left:735px;top:430px;width:273px;height:23px;background:linear-gradient(#fbfbfb 0px,#f2f2f2 11px,#e4e4e4 12px,#d8d8d8 22px);border-bottom:1px solid #8a8a8a"></div>
<div class="a" style="left:985px;top:431px;width:1px;height:21px;background:#a8a8a8"></div>
<div class="a" style="left:986px;top:431px;width:1px;height:21px;background:#fff"></div>
<div class="t" style="left:741px;top:435px;color:#000;font-size:13px;font-weight:bold">限制</div>
<svg style="left:990px;top:435px" width="14" height="12" viewBox="0 0 14 12"><path d="M1.5 9.5L7 3.5L12.5 9.5" fill="none" stroke="#555" stroke-width="2.6"/></svg>
<div class="a" style="left:735px;top:453px;width:273px;height:104px;background:#d4d4d4;border-left:1px solid #a8a8a8"></div>
<div class="a" style="left:735px;top:557px;width:273px;height:23px;background:linear-gradient(#fbfbfb 0px,#f2f2f2 11px,#e4e4e4 12px,#d8d8d8 22px);border-bottom:1px solid #8a8a8a"></div>
<div class="a" style="left:985px;top:558px;width:1px;height:21px;background:#a8a8a8"></div>
<div class="a" style="left:986px;top:558px;width:1px;height:21px;background:#fff"></div>
<div class="t" style="left:741px;top:562px;color:#000;font-size:13px;font-weight:bold">布尔</div>
<svg style="left:990px;top:562px" width="14" height="12" viewBox="0 0 14 12"><path d="M1.5 9.5L7 3.5L12.5 9.5" fill="none" stroke="#555" stroke-width="2.6"/></svg>
<div class="a" style="left:735px;top:580px;width:273px;height:42px;background:#d4d4d4;border-left:1px solid #a8a8a8"></div>
<div class="a" style="left:735px;top:622px;width:273px;height:23px;background:linear-gradient(#fbfbfb 0px,#f2f2f2 11px,#e4e4e4 12px,#d8d8d8 22px);border-bottom:1px solid #8a8a8a"></div>
<div class="a" style="left:985px;top:623px;width:1px;height:21px;background:#a8a8a8"></div>
<div class="a" style="left:986px;top:623px;width:1px;height:21px;background:#fff"></div>
<div class="t" style="left:741px;top:627px;color:#000;font-size:13px;font-weight:bold">拔模</div>
<svg style="left:990px;top:627px" width="14" height="12" viewBox="0 0 14 12"><path d="M1.5 2.5L7 9.5L12.5 2.5" fill="none" stroke="#555" stroke-width="2.6"/></svg>
<div class="a" style="left:735px;top:645px;width:273px;height:23px;background:linear-gradient(#fbfbfb 0px,#f2f2f2 11px,#e4e4e4 12px,#d8d8d8 22px);border-bottom:1px solid #8a8a8a"></div>
<div class="a" style="left:985px;top:646px;width:1px;height:21px;background:#a8a8a8"></div>
<div class="a" style="left:986px;top:646px;width:1px;height:21px;background:#fff"></div>
<div class="t" style="left:741px;top:650px;color:#000;font-size:13px;font-weight:bold">偏置</div>
<svg style="left:990px;top:650px" width="14" height="12" viewBox="0 0 14 12"><path d="M1.5 2.5L7 9.5L12.5 2.5" fill="none" stroke="#555" stroke-width="2.6"/></svg>
<div class="a" style="left:735px;top:668px;width:273px;height:23px;background:linear-gradient(#fbfbfb 0px,#f2f2f2 11px,#e4e4e4 12px,#d8d8d8 22px);border-bottom:1px solid #8a8a8a"></div>
<div class="a" style="left:985px;top:669px;width:1px;height:21px;background:#a8a8a8"></div>
<div class="a" style="left:986px;top:669px;width:1px;height:21px;background:#fff"></div>
<div class="t" style="left:741px;top:673px;color:#000;font-size:13px;font-weight:bold">设置</div>
<svg style="left:990px;top:673px" width="14" height="12" viewBox="0 0 14 12"><path d="M1.5 2.5L7 9.5L12.5 2.5" fill="none" stroke="#555" stroke-width="2.6"/></svg>
<div class="a" style="left:735px;top:691px;width:273px;height:23px;background:linear-gradient(#fbfbfb 0px,#f2f2f2 11px,#e4e4e4 12px,#d8d8d8 22px);border-bottom:1px solid #8a8a8a"></div>
<div class="a" style="left:985px;top:692px;width:1px;height:21px;background:#a8a8a8"></div>
<div class="a" style="left:986px;top:692px;width:1px;height:21px;background:#fff"></div>
<div class="t" style="left:741px;top:696px;color:#000;font-size:13px;font-weight:bold">预览</div>
<svg style="left:990px;top:696px" width="14" height="12" viewBox="0 0 14 12"><path d="M1.5 2.5L7 9.5L12.5 2.5" fill="none" stroke="#555" stroke-width="2.6"/></svg>
<div class="a" style="left:735px;top:717px;width:273px;height:1px;background:#c8c8c8"></div>
<div class="a" style="left:735px;top:718px;width:273px;height:1px;background:#fafafa"></div>
<div class="a" style="left:743px;top:293px;width:258px;height:30px;border-radius:8px;background:linear-gradient(90deg,#e2a470 0px,#e6b080 100px,#e2c8b0 150px,#d6d0cc 200px,#d3d3d3 258px)"></div>
<div class="t" style="left:749px;top:300px;color:#e00000;font-size:17px;font-weight:bold">*</div>
<div class="t" style="left:762px;top:301px;color:#000;font-size:13px">选择曲线 <span style="font-size:11.5px">(0)</span></div>
<div class="a" style="left:944px;top:300px;width:20px;height:20px;border-radius:4px;border:1px solid #3a8a3a;background:linear-gradient(#d8f0d0,#8ad07a)"></div>
<svg style="left:945px;top:301px" width="18" height="18" viewBox="0 0 18 18"><rect x="2.5" y="3" width="5" height="5" fill="none" stroke="#222" stroke-width="1"/><rect x="2.5" y="10" width="3" height="6" fill="none" stroke="#222" stroke-width="1"/><rect x="7" y="10" width="8" height="6" fill="none" stroke="#222" stroke-width="1"/><path d="M7 11L14 3.5" stroke="#d0a000" stroke-width="2.5"/><path d="M13 3L15 1.5" stroke="#e03030" stroke-width="2.5"/></svg>
<div class="a" style="left:969px;top:294px;width:30px;height:30px;border-radius:4px;border:2px solid #a06030;background:linear-gradient(#ffe8d8 0px,#ffc8a0 12px,#ff9a50 14px,#ffb070 28px)"></div>
<svg style="left:971px;top:296px" width="26" height="26" viewBox="0 0 26 26"><path d="M4 3L4 26" stroke="#111" stroke-width="1.2"/><path d="M4 4L22 11" stroke="#111" stroke-width="1"/><path d="M4 7Q17 8 23 27" fill="none" stroke="#0a1ad0" stroke-width="2.6"/><ellipse cx="18" cy="19.5" rx="3.6" ry="4.6" fill="none" stroke="#111" stroke-width="1.1"/><path d="M16 11L25 23" stroke="#111" stroke-width="0.8"/></svg>
<div class="t" style="left:749px;top:372px;color:#e00000;font-size:17px;font-weight:bold">*</div>
<div class="t" style="left:762px;top:372px;color:#000;font-size:13px">指定矢量 <span style="font-size:11.5px">(0)</span></div>
<div class="t" style="left:743px;top:402px;color:#999;font-size:13px">反向</div>
<div class="a" style="left:930px;top:368px;width:21px;height:22px;border-radius:4px;border:1px solid #7a7a7a;background:linear-gradient(#fafafa,#dedede)"></div>
<svg style="left:931px;top:369px" width="20" height="20" viewBox="0 0 20 20"><path d="M11 16L11 5" stroke="#d01010" stroke-width="1.6"/><path d="M8 7L11 2L14 7Z" fill="#d01010"/><path d="M3 10Q4 17 10 14" fill="none" stroke="#f8a010" stroke-width="2"/><rect x="11" y="16" width="2" height="2" fill="#000"/><rect x="14" y="16" width="2" height="2" fill="#000"/><rect x="17" y="16" width="2" height="2" fill="#000"/></svg>
<div class="a" style="left:956px;top:364px;width:43px;height:30px;border-radius:4px;border:1px solid #6a6a6a;background:linear-gradient(#fdfdfd,#e8e8e8 50%,#d0d0d0 55%,#f4f4f4)"></div>
<div class="a" style="left:983px;top:365px;width:15px;height:28px;border-radius:0 3px 3px 0;background:linear-gradient(#b8d4f4,#3a88e0 50%,#90c8f8);border-left:1px solid #6a8ab0"></div>
<svg style="left:984px;top:373px" width="13" height="12" viewBox="0 0 13 12"><path d="M2 4L11 4L6.5 9Z" fill="#111"/><path d="M3 5L6.5 8L10 5" fill="none" stroke="#fff" stroke-width="0.8"/></svg>
<svg style="left:960px;top:366px" width="22" height="26" viewBox="0 0 22 26"><path d="M7 24L7 6" stroke="#c01010" stroke-width="1.6"/><path d="M4 9L7 3L10 9Z" fill="#e01010"/><path d="M17 4L11 13L15 13L9 23L19 11L15 11L20 4Z" fill="#ffe020" stroke="#907000" stroke-width="0.8"/></svg>
<div class="a" style="left:977px;top:398px;width:22px;height:22px;border-radius:4px;border:1px solid #b8b8b8;background:linear-gradient(#fafafa,#e4e4e4)"></div>
<svg style="left:978px;top:399px" width="20" height="20" viewBox="0 0 20 20"><path d="M4 4L16 16" stroke="#888" stroke-width="1.1"/><path d="M11 9L16 4M9 11L4 16" stroke="#a0a0d0" stroke-width="1.8"/><path d="M13 3L17 3L17 7Z M7 17L3 17L3 13Z" fill="#a0a0d0"/></svg>
<div class="t" style="left:743px;top:462px;color:#000;font-size:13px">开始</div>
<div class="t" style="left:743px;top:485px;color:#000;font-size:13px">距离</div>
<div class="t" style="left:743px;top:508px;color:#000;font-size:13px">结束</div>
<div class="t" style="left:743px;top:531px;color:#000;font-size:13px">距离</div>
<div class="a" style="left:893px;top:460px;width:106px;height:19px;border-radius:4px;background:#fff;border:1px solid #707070;border-top:2px solid #606060"></div>
<div class="a" style="left:982px;top:460px;width:17px;height:19px;border-radius:0 4px 4px 0;background:linear-gradient(#d0e4fa 0px,#5a9ae8 45%,#3a88e8 60%,#8ac8f8);border:1px solid #4a70b0"></div>
<svg style="left:983px;top:463px" width="15" height="13" viewBox="0 0 15 13"><path d="M2 3L13 3L7.5 10Z" fill="#111"/><path d="M3.5 4.5L7.5 9L12 4.5" fill="none" stroke="#fff" stroke-width="0.8"/></svg>
<div class="t" style="left:898px;top:462px;color:#000;font-size:13px">值</div>
<div class="a" style="left:893px;top:482px;width:106px;height:20px;border-radius:4px;background:#fff;border:1px solid #707070;border-top:2px solid #606060"></div>
<div class="a" style="left:947px;top:484px;width:35px;height:17px;background:#d4d4d4"></div>
<div class="a" style="left:982px;top:482px;width:17px;height:20px;border-radius:0 4px 4px 0;background:linear-gradient(#d0e4fa 0px,#5a9ae8 45%,#3a88e8 60%,#8ac8f8);border:1px solid #4a70b0"></div>
<svg style="left:983px;top:485px" width="15" height="14" viewBox="0 0 15 14"><path d="M4.5 1L9.5 1L9.5 6L12.5 6L7 12L1.5 6L4.5 6Z" fill="#111"/></svg>
<div class="t" style="left:897px;top:484px;color:#000;font-size:11px">0</div>
<div class="t" style="left:950px;top:488px;color:#000;font-size:9px;font-weight:bold">mm</div>
<div class="a" style="left:893px;top:506px;width:106px;height:19px;border-radius:4px;background:#fff;border:1px solid #707070;border-top:2px solid #606060"></div>
<div class="a" style="left:982px;top:506px;width:17px;height:19px;border-radius:0 4px 4px 0;background:linear-gradient(#d0e4fa 0px,#5a9ae8 45%,#3a88e8 60%,#8ac8f8);border:1px solid #4a70b0"></div>
<svg style="left:983px;top:509px" width="15" height="13" viewBox="0 0 15 13"><path d="M2 3L13 3L7.5 10Z" fill="#111"/><path d="M3.5 4.5L7.5 9L12 4.5" fill="none" stroke="#fff" stroke-width="0.8"/></svg>
<div class="t" style="left:898px;top:508px;color:#000;font-size:13px">值</div>
<div class="a" style="left:893px;top:528px;width:106px;height:20px;border-radius:4px;background:#fff;border:1px solid #707070;border-top:2px solid #606060"></div>
<div class="a" style="left:947px;top:530px;width:35px;height:17px;background:#d4d4d4"></div>
<div class="a" style="left:982px;top:528px;width:17px;height:20px;border-radius:0 4px 4px 0;background:linear-gradient(#d0e4fa 0px,#5a9ae8 45%,#3a88e8 60%,#8ac8f8);border:1px solid #4a70b0"></div>
<svg style="left:983px;top:531px" width="15" height="14" viewBox="0 0 15 14"><path d="M4.5 1L9.5 1L9.5 6L12.5 6L7 12L1.5 6L4.5 6Z" fill="#111"/></svg>
<div class="t" style="left:897px;top:530px;color:#000;font-size:11px">25</div>
<div class="t" style="left:950px;top:534px;color:#000;font-size:9px;font-weight:bold">mm</div>
<div class="t" style="left:743px;top:592px;color:#000;font-size:13px">布尔</div>
<div class="a" style="left:893px;top:588px;width:106px;height:24px;border-radius:4px;background:#fff;border:1px solid #707070;border-top:2px solid #606060"></div>
<div class="a" style="left:982px;top:588px;width:17px;height:24px;border-radius:0 4px 4px 0;background:linear-gradient(#d0e4fa 0px,#5a9ae8 45%,#3a88e8 60%,#8ac8f8);border:1px solid #4a70b0"></div>
<svg style="left:983px;top:591px" width="15" height="18" viewBox="0 0 15 18"><path d="M2 3L13 3L7.5 10Z" fill="#111"/><path d="M3.5 4.5L7.5 9L12 4.5" fill="none" stroke="#fff" stroke-width="0.8"/></svg>
<svg style="left:897px;top:591px" width="20" height="18" viewBox="0 0 20 18"><circle cx="11" cy="11" r="5.5" fill="#20a090" stroke="#0a4a40" stroke-width="1"/><path d="M5 2L6 5L9 5L6.5 7L7.5 10L5 8L2.5 10L3.5 7L1 5L4 5Z" fill="#f0f020" stroke="#a0a000" stroke-width="0.5"/></svg>
<div class="t" style="left:917px;top:592px;color:#000;font-size:13px">无</div>
<div class="a" style="left:828px;top:722px;width:52px;height:19px;border-radius:4px;border:1px solid #b0b0b0;background:linear-gradient(#fdfdfd,#eeeeee 50%,#d8d8d8 60%,#f0f0f0)"></div>
<div class="t" style="left:840.0px;top:725px;color:#a0a0a0;font-size:13px;">确定</div>
<div class="a" style="left:887px;top:722px;width:52px;height:19px;border-radius:4px;border:1px solid #b0b0b0;background:linear-gradient(#fdfdfd,#eeeeee 50%,#d8d8d8 60%,#f0f0f0)"></div>
<div class="t" style="left:899.0px;top:725px;color:#a0a0a0;font-size:13px;">应用</div>
<div class="a" style="left:946px;top:722px;width:51px;height:19px;border-radius:4px;border:1px solid #5a5a5a;background:linear-gradient(#fdfdfd,#eeeeee 50%,#d8d8d8 60%,#f0f0f0)"></div>
<div class="t" style="left:957.5px;top:725px;color:#000;font-size:13px;font-weight:bold">取消</div>
<div class="a" style="left:833px;top:761px;width:150px;height:4px;background:#fafafa;border-top:1px solid #a0a0a0"></div>
<div class="a" style="left:983px;top:761px;width:30px;height:4px;background:#8a8a8a"></div></body></html>
